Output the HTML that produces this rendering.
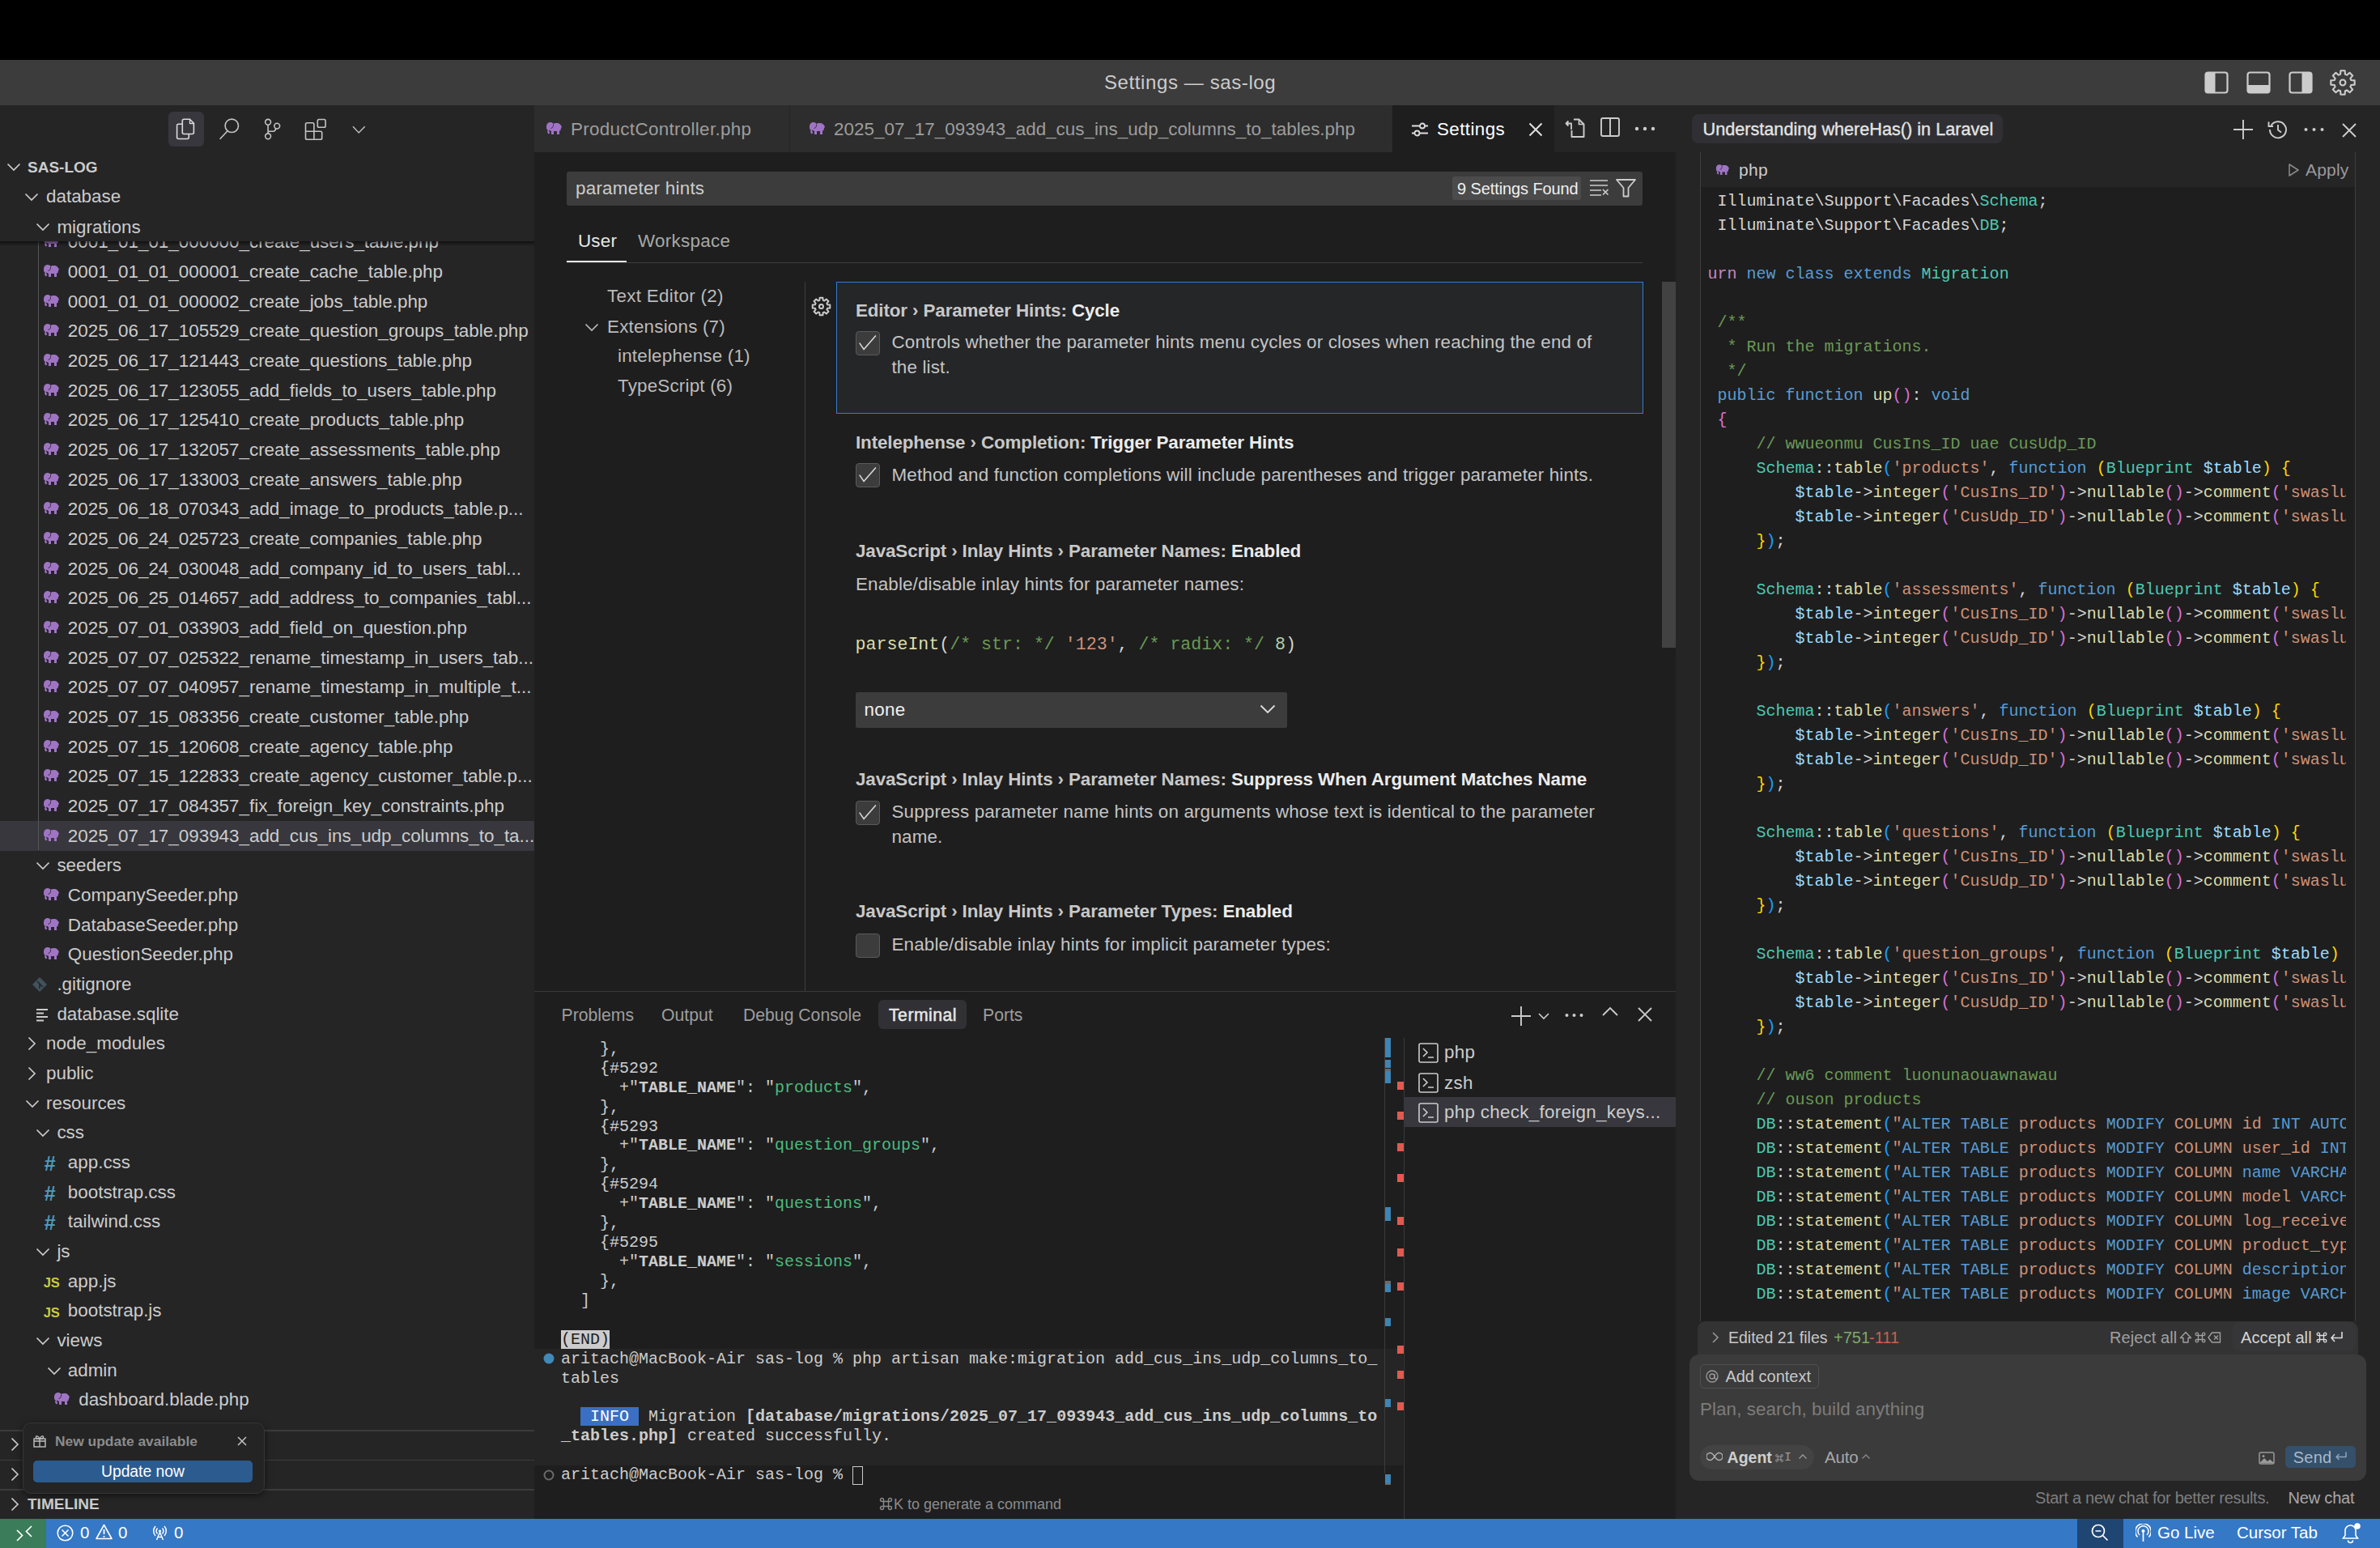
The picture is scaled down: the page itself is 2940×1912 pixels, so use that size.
<!DOCTYPE html><html><head><meta charset="utf-8"><style>
*{margin:0;padding:0;box-sizing:border-box}
html,body{width:2940px;height:1912px;overflow:hidden;background:#000;font-family:"Liberation Sans",sans-serif}
.r{position:absolute}
.t{position:absolute;white-space:pre}
.m{position:absolute;white-space:pre;font-family:"Liberation Mono",monospace}
</style></head><body><div class="r" style="left:0.0px;top:0.0px;width:2940.0px;height:74.0px;background:#000;"></div>
<div class="r" style="left:0.0px;top:74.0px;width:2940.0px;height:56.0px;background:#3c3c3c;"></div>
<div class="r" style="left:0.0px;top:130.0px;width:660.0px;height:1746.0px;background:#252526;"></div>
<div class="r" style="left:660.0px;top:130.0px;width:1410.0px;height:58.0px;background:#252526;"></div>
<div class="r" style="left:660.0px;top:188.0px;width:1410.0px;height:1036.0px;background:#1e1e1e;"></div>
<div class="r" style="left:660.0px;top:1224.0px;width:1410.0px;height:652.0px;background:#1e1e1e;"></div>
<div class="r" style="left:2070.0px;top:130.0px;width:870.0px;height:1746.0px;background:#252526;"></div>
<div class="r" style="left:0.0px;top:1876.0px;width:2940.0px;height:36.0px;background:#3478c6;"></div>
<div class="t" style="left:1364.0px;top:82.0px;font-size:24px;line-height:40px;color:#cccccc;font-weight:400;letter-spacing:0.6px;">Settings — sas-log</div>
<svg class="r" style="left:2722.0px;top:86.0px;" width="32" height="32" viewBox="0 0 32 32"><rect x="2.5" y="3.5" width="27" height="25" rx="3" fill="none" stroke="#ccc" stroke-width="2.2"/><rect x="3" y="4" width="11.5" height="24" fill="#ccc"/></svg>
<svg class="r" style="left:2774.0px;top:86.0px;" width="32" height="32" viewBox="0 0 32 32"><rect x="2.5" y="3.5" width="27" height="25" rx="3" fill="none" stroke="#ccc" stroke-width="2.2"/><rect x="3" y="19" width="26" height="9" fill="#ccc"/></svg>
<svg class="r" style="left:2826.0px;top:86.0px;" width="32" height="32" viewBox="0 0 32 32"><rect x="2.5" y="3.5" width="27" height="25" rx="3" fill="none" stroke="#ccc" stroke-width="2.2"/><rect x="17.5" y="4" width="11.5" height="24" fill="#ccc"/></svg>
<svg class="r" style="left:2877.0px;top:85.0px;" width="34" height="34" viewBox="0 0 32 32"><g transform="translate(16 16) scale(0.9) translate(-16 -16)"><path d="M12.91,5.23 L13.29,0.64 L18.71,0.64 L19.09,5.23 L21.43,6.20 L24.95,3.22 L28.78,7.05 L25.80,10.57 L26.77,12.91 L31.36,13.29 L31.36,18.71 L26.77,19.09 L25.80,21.43 L28.78,24.95 L24.95,28.78 L21.43,25.80 L19.09,26.77 L18.71,31.36 L13.29,31.36 L12.91,26.77 L10.57,25.80 L7.05,28.78 L3.22,24.95 L6.20,21.43 L5.23,19.09 L0.64,18.71 L0.64,13.29 L5.23,12.91 L6.20,10.57 L3.22,7.05 L7.05,3.22 L10.57,6.20Z" fill="none" stroke="#ccc" stroke-width="2.2" stroke-linejoin="round"/><circle cx="16" cy="16" r="3.6" fill="none" stroke="#ccc" stroke-width="2.2"/></g></svg>
<div class="r" style="left:208.0px;top:138.0px;width:44.0px;height:43.0px;background:#37373d;border-radius:6px"></div>
<svg class="r" style="left:200.0px;top:130.0px;" width="260" height="60" viewBox="0 0 260 60">
<g fill="none" stroke-width="1.6" stroke-linejoin="round">
<path d="M18.6 25.3V39.5a2 2 0 0 0 2 2H31.3a2 2 0 0 0 2-2v-4" stroke="#dcdcdc"/>
<path d="M25.3 23.3h-4.7a2 2 0 0 0-2 2" stroke="#dcdcdc"/>
<path d="M27.3 17.2h7.1l5 5V33.5a2 2 0 0 1-2 2H27.3a2 2 0 0 1-2-2V19.2a2 2 0 0 1 2-2z" stroke="#dcdcdc"/>
<path d="M34.5 17.5v5h5" stroke="#dcdcdc" stroke-width="1.3"/>
<circle cx="86.3" cy="25.3" r="8.2" stroke="#c4c4c4"/>
<path d="M80.6 32.2L72.1 41.3" stroke="#c4c4c4" stroke-linecap="round"/>
<circle cx="131.1" cy="20.8" r="3.4" stroke="#c4c4c4"/>
<circle cx="131.1" cy="38.3" r="3.4" stroke="#c4c4c4"/>
<circle cx="142.2" cy="25.6" r="3.4" stroke="#c4c4c4"/>
<path d="M131.1 24.2V34.9M131.1 32.2h6.5c1.5 0 2.8-1.8 3.2-3.4" stroke="#c4c4c4"/>
<path d="M177.5 23.5a1.8 1.8 0 0 1 1.8-1.8h6.8a1.8 1.8 0 0 1 1.8 1.8v8.7h8a1.8 1.8 0 0 1 1.8 1.8v6.5a1.8 1.8 0 0 1-1.8 1.8H179.3a1.8 1.8 0 0 1-1.8-1.8z" stroke="#c4c4c4"/>
<path d="M177.5 32.2h10.4v9.6" stroke="#c4c4c4"/>
<rect x="192.3" y="17.5" width="9.8" height="9.8" rx="1.8" stroke="#c4c4c4"/>
<path d="M236 26.2l7.1 7.7 7.6-7.7" stroke="#c4c4c4" stroke-width="1.4"/>
</g></svg>
<div class="r" style="left:0;top:298px;width:660px;height:1468px;overflow:hidden">
<svg class="r" style="left:52.8px;top:-7.7px;" width="20" height="15" viewBox="0 0 20 15"><path d="M1,6 C1,2 3,0 6,0 C8,0 9,1 9.5,2 C10.5,1 12,1 14,1 C17,1 19,3 20,6 L19,7 L18.5,10 L17,10.5 L17,15 L14,15 L14,11 L10,11 L10,15 L7,15 L7,11 C6,10.5 5,10 4.5,9.5 L4,11 L5.5,13 L3.5,14.5 L2,12 L2.8,9.8 C1.3,9 1,8 1,6 Z" fill="#a074c4"/><path d="M9.5 2.5 C9.8 5 9 7 6.5 7.5" fill="none" stroke="#252526" stroke-width="0.9"/></svg>
<div class="t" style="left:83.8px;top:-16.7px;font-size:22.4px;line-height:36px;color:#cccccc;font-weight:400;letter-spacing:0px;">0001_01_01_000000_create_users_table.php</div>
<svg class="r" style="left:52.8px;top:29.0px;" width="20" height="15" viewBox="0 0 20 15"><path d="M1,6 C1,2 3,0 6,0 C8,0 9,1 9.5,2 C10.5,1 12,1 14,1 C17,1 19,3 20,6 L19,7 L18.5,10 L17,10.5 L17,15 L14,15 L14,11 L10,11 L10,15 L7,15 L7,11 C6,10.5 5,10 4.5,9.5 L4,11 L5.5,13 L3.5,14.5 L2,12 L2.8,9.8 C1.3,9 1,8 1,6 Z" fill="#a074c4"/><path d="M9.5 2.5 C9.8 5 9 7 6.5 7.5" fill="none" stroke="#252526" stroke-width="0.9"/></svg>
<div class="t" style="left:83.8px;top:20.0px;font-size:22.4px;line-height:36px;color:#cccccc;font-weight:400;letter-spacing:0px;">0001_01_01_000001_create_cache_table.php</div>
<svg class="r" style="left:52.8px;top:65.7px;" width="20" height="15" viewBox="0 0 20 15"><path d="M1,6 C1,2 3,0 6,0 C8,0 9,1 9.5,2 C10.5,1 12,1 14,1 C17,1 19,3 20,6 L19,7 L18.5,10 L17,10.5 L17,15 L14,15 L14,11 L10,11 L10,15 L7,15 L7,11 C6,10.5 5,10 4.5,9.5 L4,11 L5.5,13 L3.5,14.5 L2,12 L2.8,9.8 C1.3,9 1,8 1,6 Z" fill="#a074c4"/><path d="M9.5 2.5 C9.8 5 9 7 6.5 7.5" fill="none" stroke="#252526" stroke-width="0.9"/></svg>
<div class="t" style="left:83.8px;top:56.7px;font-size:22.4px;line-height:36px;color:#cccccc;font-weight:400;letter-spacing:0px;">0001_01_01_000002_create_jobs_table.php</div>
<svg class="r" style="left:52.8px;top:102.3px;" width="20" height="15" viewBox="0 0 20 15"><path d="M1,6 C1,2 3,0 6,0 C8,0 9,1 9.5,2 C10.5,1 12,1 14,1 C17,1 19,3 20,6 L19,7 L18.5,10 L17,10.5 L17,15 L14,15 L14,11 L10,11 L10,15 L7,15 L7,11 C6,10.5 5,10 4.5,9.5 L4,11 L5.5,13 L3.5,14.5 L2,12 L2.8,9.8 C1.3,9 1,8 1,6 Z" fill="#a074c4"/><path d="M9.5 2.5 C9.8 5 9 7 6.5 7.5" fill="none" stroke="#252526" stroke-width="0.9"/></svg>
<div class="t" style="left:83.8px;top:93.3px;font-size:22.4px;line-height:36px;color:#cccccc;font-weight:400;letter-spacing:0px;">2025_06_17_105529_create_question_groups_table.php</div>
<svg class="r" style="left:52.8px;top:139.0px;" width="20" height="15" viewBox="0 0 20 15"><path d="M1,6 C1,2 3,0 6,0 C8,0 9,1 9.5,2 C10.5,1 12,1 14,1 C17,1 19,3 20,6 L19,7 L18.5,10 L17,10.5 L17,15 L14,15 L14,11 L10,11 L10,15 L7,15 L7,11 C6,10.5 5,10 4.5,9.5 L4,11 L5.5,13 L3.5,14.5 L2,12 L2.8,9.8 C1.3,9 1,8 1,6 Z" fill="#a074c4"/><path d="M9.5 2.5 C9.8 5 9 7 6.5 7.5" fill="none" stroke="#252526" stroke-width="0.9"/></svg>
<div class="t" style="left:83.8px;top:130.0px;font-size:22.4px;line-height:36px;color:#cccccc;font-weight:400;letter-spacing:0px;">2025_06_17_121443_create_questions_table.php</div>
<svg class="r" style="left:52.8px;top:175.7px;" width="20" height="15" viewBox="0 0 20 15"><path d="M1,6 C1,2 3,0 6,0 C8,0 9,1 9.5,2 C10.5,1 12,1 14,1 C17,1 19,3 20,6 L19,7 L18.5,10 L17,10.5 L17,15 L14,15 L14,11 L10,11 L10,15 L7,15 L7,11 C6,10.5 5,10 4.5,9.5 L4,11 L5.5,13 L3.5,14.5 L2,12 L2.8,9.8 C1.3,9 1,8 1,6 Z" fill="#a074c4"/><path d="M9.5 2.5 C9.8 5 9 7 6.5 7.5" fill="none" stroke="#252526" stroke-width="0.9"/></svg>
<div class="t" style="left:83.8px;top:166.7px;font-size:22.4px;line-height:36px;color:#cccccc;font-weight:400;letter-spacing:0px;">2025_06_17_123055_add_fields_to_users_table.php</div>
<svg class="r" style="left:52.8px;top:212.3px;" width="20" height="15" viewBox="0 0 20 15"><path d="M1,6 C1,2 3,0 6,0 C8,0 9,1 9.5,2 C10.5,1 12,1 14,1 C17,1 19,3 20,6 L19,7 L18.5,10 L17,10.5 L17,15 L14,15 L14,11 L10,11 L10,15 L7,15 L7,11 C6,10.5 5,10 4.5,9.5 L4,11 L5.5,13 L3.5,14.5 L2,12 L2.8,9.8 C1.3,9 1,8 1,6 Z" fill="#a074c4"/><path d="M9.5 2.5 C9.8 5 9 7 6.5 7.5" fill="none" stroke="#252526" stroke-width="0.9"/></svg>
<div class="t" style="left:83.8px;top:203.3px;font-size:22.4px;line-height:36px;color:#cccccc;font-weight:400;letter-spacing:0px;">2025_06_17_125410_create_products_table.php</div>
<svg class="r" style="left:52.8px;top:249.0px;" width="20" height="15" viewBox="0 0 20 15"><path d="M1,6 C1,2 3,0 6,0 C8,0 9,1 9.5,2 C10.5,1 12,1 14,1 C17,1 19,3 20,6 L19,7 L18.5,10 L17,10.5 L17,15 L14,15 L14,11 L10,11 L10,15 L7,15 L7,11 C6,10.5 5,10 4.5,9.5 L4,11 L5.5,13 L3.5,14.5 L2,12 L2.8,9.8 C1.3,9 1,8 1,6 Z" fill="#a074c4"/><path d="M9.5 2.5 C9.8 5 9 7 6.5 7.5" fill="none" stroke="#252526" stroke-width="0.9"/></svg>
<div class="t" style="left:83.8px;top:240.0px;font-size:22.4px;line-height:36px;color:#cccccc;font-weight:400;letter-spacing:0px;">2025_06_17_132057_create_assessments_table.php</div>
<svg class="r" style="left:52.8px;top:285.7px;" width="20" height="15" viewBox="0 0 20 15"><path d="M1,6 C1,2 3,0 6,0 C8,0 9,1 9.5,2 C10.5,1 12,1 14,1 C17,1 19,3 20,6 L19,7 L18.5,10 L17,10.5 L17,15 L14,15 L14,11 L10,11 L10,15 L7,15 L7,11 C6,10.5 5,10 4.5,9.5 L4,11 L5.5,13 L3.5,14.5 L2,12 L2.8,9.8 C1.3,9 1,8 1,6 Z" fill="#a074c4"/><path d="M9.5 2.5 C9.8 5 9 7 6.5 7.5" fill="none" stroke="#252526" stroke-width="0.9"/></svg>
<div class="t" style="left:83.8px;top:276.7px;font-size:22.4px;line-height:36px;color:#cccccc;font-weight:400;letter-spacing:0px;">2025_06_17_133003_create_answers_table.php</div>
<svg class="r" style="left:52.8px;top:322.3px;" width="20" height="15" viewBox="0 0 20 15"><path d="M1,6 C1,2 3,0 6,0 C8,0 9,1 9.5,2 C10.5,1 12,1 14,1 C17,1 19,3 20,6 L19,7 L18.5,10 L17,10.5 L17,15 L14,15 L14,11 L10,11 L10,15 L7,15 L7,11 C6,10.5 5,10 4.5,9.5 L4,11 L5.5,13 L3.5,14.5 L2,12 L2.8,9.8 C1.3,9 1,8 1,6 Z" fill="#a074c4"/><path d="M9.5 2.5 C9.8 5 9 7 6.5 7.5" fill="none" stroke="#252526" stroke-width="0.9"/></svg>
<div class="t" style="left:83.8px;top:313.3px;font-size:22.4px;line-height:36px;color:#cccccc;font-weight:400;letter-spacing:0px;">2025_06_18_070343_add_image_to_products_table.p...</div>
<svg class="r" style="left:52.8px;top:359.0px;" width="20" height="15" viewBox="0 0 20 15"><path d="M1,6 C1,2 3,0 6,0 C8,0 9,1 9.5,2 C10.5,1 12,1 14,1 C17,1 19,3 20,6 L19,7 L18.5,10 L17,10.5 L17,15 L14,15 L14,11 L10,11 L10,15 L7,15 L7,11 C6,10.5 5,10 4.5,9.5 L4,11 L5.5,13 L3.5,14.5 L2,12 L2.8,9.8 C1.3,9 1,8 1,6 Z" fill="#a074c4"/><path d="M9.5 2.5 C9.8 5 9 7 6.5 7.5" fill="none" stroke="#252526" stroke-width="0.9"/></svg>
<div class="t" style="left:83.8px;top:350.0px;font-size:22.4px;line-height:36px;color:#cccccc;font-weight:400;letter-spacing:0px;">2025_06_24_025723_create_companies_table.php</div>
<svg class="r" style="left:52.8px;top:395.7px;" width="20" height="15" viewBox="0 0 20 15"><path d="M1,6 C1,2 3,0 6,0 C8,0 9,1 9.5,2 C10.5,1 12,1 14,1 C17,1 19,3 20,6 L19,7 L18.5,10 L17,10.5 L17,15 L14,15 L14,11 L10,11 L10,15 L7,15 L7,11 C6,10.5 5,10 4.5,9.5 L4,11 L5.5,13 L3.5,14.5 L2,12 L2.8,9.8 C1.3,9 1,8 1,6 Z" fill="#a074c4"/><path d="M9.5 2.5 C9.8 5 9 7 6.5 7.5" fill="none" stroke="#252526" stroke-width="0.9"/></svg>
<div class="t" style="left:83.8px;top:386.7px;font-size:22.4px;line-height:36px;color:#cccccc;font-weight:400;letter-spacing:0px;">2025_06_24_030048_add_company_id_to_users_tabl...</div>
<svg class="r" style="left:52.8px;top:432.3px;" width="20" height="15" viewBox="0 0 20 15"><path d="M1,6 C1,2 3,0 6,0 C8,0 9,1 9.5,2 C10.5,1 12,1 14,1 C17,1 19,3 20,6 L19,7 L18.5,10 L17,10.5 L17,15 L14,15 L14,11 L10,11 L10,15 L7,15 L7,11 C6,10.5 5,10 4.5,9.5 L4,11 L5.5,13 L3.5,14.5 L2,12 L2.8,9.8 C1.3,9 1,8 1,6 Z" fill="#a074c4"/><path d="M9.5 2.5 C9.8 5 9 7 6.5 7.5" fill="none" stroke="#252526" stroke-width="0.9"/></svg>
<div class="t" style="left:83.8px;top:423.3px;font-size:22.4px;line-height:36px;color:#cccccc;font-weight:400;letter-spacing:0px;">2025_06_25_014657_add_address_to_companies_tabl...</div>
<svg class="r" style="left:52.8px;top:469.0px;" width="20" height="15" viewBox="0 0 20 15"><path d="M1,6 C1,2 3,0 6,0 C8,0 9,1 9.5,2 C10.5,1 12,1 14,1 C17,1 19,3 20,6 L19,7 L18.5,10 L17,10.5 L17,15 L14,15 L14,11 L10,11 L10,15 L7,15 L7,11 C6,10.5 5,10 4.5,9.5 L4,11 L5.5,13 L3.5,14.5 L2,12 L2.8,9.8 C1.3,9 1,8 1,6 Z" fill="#a074c4"/><path d="M9.5 2.5 C9.8 5 9 7 6.5 7.5" fill="none" stroke="#252526" stroke-width="0.9"/></svg>
<div class="t" style="left:83.8px;top:460.0px;font-size:22.4px;line-height:36px;color:#cccccc;font-weight:400;letter-spacing:0px;">2025_07_01_033903_add_field_on_question.php</div>
<svg class="r" style="left:52.8px;top:505.7px;" width="20" height="15" viewBox="0 0 20 15"><path d="M1,6 C1,2 3,0 6,0 C8,0 9,1 9.5,2 C10.5,1 12,1 14,1 C17,1 19,3 20,6 L19,7 L18.5,10 L17,10.5 L17,15 L14,15 L14,11 L10,11 L10,15 L7,15 L7,11 C6,10.5 5,10 4.5,9.5 L4,11 L5.5,13 L3.5,14.5 L2,12 L2.8,9.8 C1.3,9 1,8 1,6 Z" fill="#a074c4"/><path d="M9.5 2.5 C9.8 5 9 7 6.5 7.5" fill="none" stroke="#252526" stroke-width="0.9"/></svg>
<div class="t" style="left:83.8px;top:496.7px;font-size:22.4px;line-height:36px;color:#cccccc;font-weight:400;letter-spacing:0px;">2025_07_07_025322_rename_timestamp_in_users_tab...</div>
<svg class="r" style="left:52.8px;top:542.3px;" width="20" height="15" viewBox="0 0 20 15"><path d="M1,6 C1,2 3,0 6,0 C8,0 9,1 9.5,2 C10.5,1 12,1 14,1 C17,1 19,3 20,6 L19,7 L18.5,10 L17,10.5 L17,15 L14,15 L14,11 L10,11 L10,15 L7,15 L7,11 C6,10.5 5,10 4.5,9.5 L4,11 L5.5,13 L3.5,14.5 L2,12 L2.8,9.8 C1.3,9 1,8 1,6 Z" fill="#a074c4"/><path d="M9.5 2.5 C9.8 5 9 7 6.5 7.5" fill="none" stroke="#252526" stroke-width="0.9"/></svg>
<div class="t" style="left:83.8px;top:533.3px;font-size:22.4px;line-height:36px;color:#cccccc;font-weight:400;letter-spacing:0px;">2025_07_07_040957_rename_timestamp_in_multiple_t...</div>
<svg class="r" style="left:52.8px;top:579.0px;" width="20" height="15" viewBox="0 0 20 15"><path d="M1,6 C1,2 3,0 6,0 C8,0 9,1 9.5,2 C10.5,1 12,1 14,1 C17,1 19,3 20,6 L19,7 L18.5,10 L17,10.5 L17,15 L14,15 L14,11 L10,11 L10,15 L7,15 L7,11 C6,10.5 5,10 4.5,9.5 L4,11 L5.5,13 L3.5,14.5 L2,12 L2.8,9.8 C1.3,9 1,8 1,6 Z" fill="#a074c4"/><path d="M9.5 2.5 C9.8 5 9 7 6.5 7.5" fill="none" stroke="#252526" stroke-width="0.9"/></svg>
<div class="t" style="left:83.8px;top:570.0px;font-size:22.4px;line-height:36px;color:#cccccc;font-weight:400;letter-spacing:0px;">2025_07_15_083356_create_customer_table.php</div>
<svg class="r" style="left:52.8px;top:615.7px;" width="20" height="15" viewBox="0 0 20 15"><path d="M1,6 C1,2 3,0 6,0 C8,0 9,1 9.5,2 C10.5,1 12,1 14,1 C17,1 19,3 20,6 L19,7 L18.5,10 L17,10.5 L17,15 L14,15 L14,11 L10,11 L10,15 L7,15 L7,11 C6,10.5 5,10 4.5,9.5 L4,11 L5.5,13 L3.5,14.5 L2,12 L2.8,9.8 C1.3,9 1,8 1,6 Z" fill="#a074c4"/><path d="M9.5 2.5 C9.8 5 9 7 6.5 7.5" fill="none" stroke="#252526" stroke-width="0.9"/></svg>
<div class="t" style="left:83.8px;top:606.7px;font-size:22.4px;line-height:36px;color:#cccccc;font-weight:400;letter-spacing:0px;">2025_07_15_120608_create_agency_table.php</div>
<svg class="r" style="left:52.8px;top:652.3px;" width="20" height="15" viewBox="0 0 20 15"><path d="M1,6 C1,2 3,0 6,0 C8,0 9,1 9.5,2 C10.5,1 12,1 14,1 C17,1 19,3 20,6 L19,7 L18.5,10 L17,10.5 L17,15 L14,15 L14,11 L10,11 L10,15 L7,15 L7,11 C6,10.5 5,10 4.5,9.5 L4,11 L5.5,13 L3.5,14.5 L2,12 L2.8,9.8 C1.3,9 1,8 1,6 Z" fill="#a074c4"/><path d="M9.5 2.5 C9.8 5 9 7 6.5 7.5" fill="none" stroke="#252526" stroke-width="0.9"/></svg>
<div class="t" style="left:83.8px;top:643.3px;font-size:22.4px;line-height:36px;color:#cccccc;font-weight:400;letter-spacing:0px;">2025_07_15_122833_create_agency_customer_table.p...</div>
<svg class="r" style="left:52.8px;top:689.0px;" width="20" height="15" viewBox="0 0 20 15"><path d="M1,6 C1,2 3,0 6,0 C8,0 9,1 9.5,2 C10.5,1 12,1 14,1 C17,1 19,3 20,6 L19,7 L18.5,10 L17,10.5 L17,15 L14,15 L14,11 L10,11 L10,15 L7,15 L7,11 C6,10.5 5,10 4.5,9.5 L4,11 L5.5,13 L3.5,14.5 L2,12 L2.8,9.8 C1.3,9 1,8 1,6 Z" fill="#a074c4"/><path d="M9.5 2.5 C9.8 5 9 7 6.5 7.5" fill="none" stroke="#252526" stroke-width="0.9"/></svg>
<div class="t" style="left:83.8px;top:680.0px;font-size:22.4px;line-height:36px;color:#cccccc;font-weight:400;letter-spacing:0px;">2025_07_17_084357_fix_foreign_key_constraints.php</div>
<div class="r" style="left:0.0px;top:716.3px;width:660.0px;height:36.7px;background:#37373d;"></div>
<svg class="r" style="left:52.8px;top:725.7px;" width="20" height="15" viewBox="0 0 20 15"><path d="M1,6 C1,2 3,0 6,0 C8,0 9,1 9.5,2 C10.5,1 12,1 14,1 C17,1 19,3 20,6 L19,7 L18.5,10 L17,10.5 L17,15 L14,15 L14,11 L10,11 L10,15 L7,15 L7,11 C6,10.5 5,10 4.5,9.5 L4,11 L5.5,13 L3.5,14.5 L2,12 L2.8,9.8 C1.3,9 1,8 1,6 Z" fill="#a074c4"/><path d="M9.5 2.5 C9.8 5 9 7 6.5 7.5" fill="none" stroke="#37373d" stroke-width="0.9"/></svg>
<div class="t" style="left:83.8px;top:716.7px;font-size:22.4px;line-height:36px;color:#cccccc;font-weight:400;letter-spacing:0px;">2025_07_17_093943_add_cus_ins_udp_columns_to_ta...</div>
<svg class="r" style="left:44.4px;top:765.3px;" width="18" height="12" viewBox="0 0 18 12"><path d="M1.5 2.5l7.5 7.5 7.5-7.5" fill="none" stroke="#cccccc" stroke-width="1.7"/></svg>
<div class="t" style="left:70.4px;top:753.3px;font-size:22.4px;line-height:36px;color:#cccccc;font-weight:400;letter-spacing:0px;">seeders</div>
<svg class="r" style="left:52.8px;top:799.0px;" width="20" height="15" viewBox="0 0 20 15"><path d="M1,6 C1,2 3,0 6,0 C8,0 9,1 9.5,2 C10.5,1 12,1 14,1 C17,1 19,3 20,6 L19,7 L18.5,10 L17,10.5 L17,15 L14,15 L14,11 L10,11 L10,15 L7,15 L7,11 C6,10.5 5,10 4.5,9.5 L4,11 L5.5,13 L3.5,14.5 L2,12 L2.8,9.8 C1.3,9 1,8 1,6 Z" fill="#a074c4"/><path d="M9.5 2.5 C9.8 5 9 7 6.5 7.5" fill="none" stroke="#252526" stroke-width="0.9"/></svg>
<div class="t" style="left:83.8px;top:790.0px;font-size:22.4px;line-height:36px;color:#cccccc;font-weight:400;letter-spacing:0px;">CompanySeeder.php</div>
<svg class="r" style="left:52.8px;top:835.7px;" width="20" height="15" viewBox="0 0 20 15"><path d="M1,6 C1,2 3,0 6,0 C8,0 9,1 9.5,2 C10.5,1 12,1 14,1 C17,1 19,3 20,6 L19,7 L18.5,10 L17,10.5 L17,15 L14,15 L14,11 L10,11 L10,15 L7,15 L7,11 C6,10.5 5,10 4.5,9.5 L4,11 L5.5,13 L3.5,14.5 L2,12 L2.8,9.8 C1.3,9 1,8 1,6 Z" fill="#a074c4"/><path d="M9.5 2.5 C9.8 5 9 7 6.5 7.5" fill="none" stroke="#252526" stroke-width="0.9"/></svg>
<div class="t" style="left:83.8px;top:826.7px;font-size:22.4px;line-height:36px;color:#cccccc;font-weight:400;letter-spacing:0px;">DatabaseSeeder.php</div>
<svg class="r" style="left:52.8px;top:872.3px;" width="20" height="15" viewBox="0 0 20 15"><path d="M1,6 C1,2 3,0 6,0 C8,0 9,1 9.5,2 C10.5,1 12,1 14,1 C17,1 19,3 20,6 L19,7 L18.5,10 L17,10.5 L17,15 L14,15 L14,11 L10,11 L10,15 L7,15 L7,11 C6,10.5 5,10 4.5,9.5 L4,11 L5.5,13 L3.5,14.5 L2,12 L2.8,9.8 C1.3,9 1,8 1,6 Z" fill="#a074c4"/><path d="M9.5 2.5 C9.8 5 9 7 6.5 7.5" fill="none" stroke="#252526" stroke-width="0.9"/></svg>
<div class="t" style="left:83.8px;top:863.3px;font-size:22.4px;line-height:36px;color:#cccccc;font-weight:400;letter-spacing:0px;">QuestionSeeder.php</div>
<svg class="r" style="left:39.4px;top:908.0px;" width="20" height="20" viewBox="0 0 20 20"><path d="M10 1L19 10 10 19 1 10Z" fill="#41535b"/><path d="M7 6l3 3M10 9v6M10 9l4 4" stroke="#252526" stroke-width="1.6"/></svg>
<div class="t" style="left:70.4px;top:900.0px;font-size:22.4px;line-height:36px;color:#cccccc;font-weight:400;letter-spacing:0px;">.gitignore</div>
<svg class="r" style="left:43.4px;top:945.7px;" width="18" height="18" viewBox="0 0 18 18"><path d="M2 3h14M2 7.5h9M2 12h14M2 16.5h9" stroke="#cccccc" stroke-width="1.8"/></svg>
<div class="t" style="left:70.4px;top:936.7px;font-size:22.4px;line-height:36px;color:#cccccc;font-weight:400;letter-spacing:0px;">database.sqlite</div>
<svg class="r" style="left:33.0px;top:982.3px;" width="12" height="18" viewBox="0 0 12 18"><path d="M2.5 1.5l7.5 7.5-7.5 7.5" fill="none" stroke="#cccccc" stroke-width="1.7"/></svg>
<div class="t" style="left:57.0px;top:973.3px;font-size:22.4px;line-height:36px;color:#cccccc;font-weight:400;letter-spacing:0px;">node_modules</div>
<svg class="r" style="left:33.0px;top:1019.0px;" width="12" height="18" viewBox="0 0 12 18"><path d="M2.5 1.5l7.5 7.5-7.5 7.5" fill="none" stroke="#cccccc" stroke-width="1.7"/></svg>
<div class="t" style="left:57.0px;top:1010.0px;font-size:22.4px;line-height:36px;color:#cccccc;font-weight:400;letter-spacing:0px;">public</div>
<svg class="r" style="left:31.0px;top:1058.7px;" width="18" height="12" viewBox="0 0 18 12"><path d="M1.5 2.5l7.5 7.5 7.5-7.5" fill="none" stroke="#cccccc" stroke-width="1.7"/></svg>
<div class="t" style="left:57.0px;top:1046.7px;font-size:22.4px;line-height:36px;color:#cccccc;font-weight:400;letter-spacing:0px;">resources</div>
<svg class="r" style="left:44.4px;top:1095.3px;" width="18" height="12" viewBox="0 0 18 12"><path d="M1.5 2.5l7.5 7.5 7.5-7.5" fill="none" stroke="#cccccc" stroke-width="1.7"/></svg>
<div class="t" style="left:70.4px;top:1083.3px;font-size:22.4px;line-height:36px;color:#cccccc;font-weight:400;letter-spacing:0px;">css</div>
<div class="t" style="left:54.8px;top:1121.0px;font-size:25px;line-height:36px;color:#519aba;font-weight:700;letter-spacing:0px;">#</div>
<div class="t" style="left:83.8px;top:1120.0px;font-size:22.4px;line-height:36px;color:#cccccc;font-weight:400;letter-spacing:0px;">app.css</div>
<div class="t" style="left:54.8px;top:1157.7px;font-size:25px;line-height:36px;color:#519aba;font-weight:700;letter-spacing:0px;">#</div>
<div class="t" style="left:83.8px;top:1156.7px;font-size:22.4px;line-height:36px;color:#cccccc;font-weight:400;letter-spacing:0px;">bootstrap.css</div>
<div class="t" style="left:54.8px;top:1194.3px;font-size:25px;line-height:36px;color:#519aba;font-weight:700;letter-spacing:0px;">#</div>
<div class="t" style="left:83.8px;top:1193.3px;font-size:22.4px;line-height:36px;color:#cccccc;font-weight:400;letter-spacing:0px;">tailwind.css</div>
<svg class="r" style="left:44.4px;top:1242.0px;" width="18" height="12" viewBox="0 0 18 12"><path d="M1.5 2.5l7.5 7.5 7.5-7.5" fill="none" stroke="#cccccc" stroke-width="1.7"/></svg>
<div class="t" style="left:70.4px;top:1230.0px;font-size:22.4px;line-height:36px;color:#cccccc;font-weight:400;letter-spacing:0px;">js</div>
<div class="t" style="left:53.8px;top:1268.2px;font-size:16.5px;line-height:36px;color:#cbcb41;font-weight:700;letter-spacing:-0.3px;">JS</div>
<div class="t" style="left:83.8px;top:1266.7px;font-size:22.4px;line-height:36px;color:#cccccc;font-weight:400;letter-spacing:0px;">app.js</div>
<div class="t" style="left:53.8px;top:1304.8px;font-size:16.5px;line-height:36px;color:#cbcb41;font-weight:700;letter-spacing:-0.3px;">JS</div>
<div class="t" style="left:83.8px;top:1303.3px;font-size:22.4px;line-height:36px;color:#cccccc;font-weight:400;letter-spacing:0px;">bootstrap.js</div>
<svg class="r" style="left:44.4px;top:1352.0px;" width="18" height="12" viewBox="0 0 18 12"><path d="M1.5 2.5l7.5 7.5 7.5-7.5" fill="none" stroke="#cccccc" stroke-width="1.7"/></svg>
<div class="t" style="left:70.4px;top:1340.0px;font-size:22.4px;line-height:36px;color:#cccccc;font-weight:400;letter-spacing:0px;">views</div>
<svg class="r" style="left:57.8px;top:1388.7px;" width="18" height="12" viewBox="0 0 18 12"><path d="M1.5 2.5l7.5 7.5 7.5-7.5" fill="none" stroke="#cccccc" stroke-width="1.7"/></svg>
<div class="t" style="left:83.8px;top:1376.7px;font-size:22.4px;line-height:36px;color:#cccccc;font-weight:400;letter-spacing:0px;">admin</div>
<svg class="r" style="left:66.2px;top:1422.3px;" width="20" height="15" viewBox="0 0 20 15"><path d="M1,6 C1,2 3,0 6,0 C8,0 9,1 9.5,2 C10.5,1 12,1 14,1 C17,1 19,3 20,6 L19,7 L18.5,10 L17,10.5 L17,15 L14,15 L14,11 L10,11 L10,15 L7,15 L7,11 C6,10.5 5,10 4.5,9.5 L4,11 L5.5,13 L3.5,14.5 L2,12 L2.8,9.8 C1.3,9 1,8 1,6 Z" fill="#a074c4"/><path d="M9.5 2.5 C9.8 5 9 7 6.5 7.5" fill="none" stroke="#252526" stroke-width="0.9"/></svg>
<div class="t" style="left:97.2px;top:1413.3px;font-size:22.4px;line-height:36px;color:#cccccc;font-weight:400;letter-spacing:0px;">dashboard.blade.php</div>
<div class="r" style="left:47.0px;top:0.0px;width:1.2px;height:752.0px;background:#555555;"></div>
</div>
<div class="r" style="left:0.0px;top:188.0px;width:660.0px;height:110.0px;background:#252526;"></div>
<div class="r" style="left:0.0px;top:298.0px;width:660.0px;height:6.0px;background:linear-gradient(#0000008a,#0000);"></div>
<svg class="r" style="left:8.0px;top:200.0px;" width="18" height="12" viewBox="0 0 18 12"><path d="M1.5 2.5l7.5 7.5 7.5-7.5" fill="none" stroke="#cccccc" stroke-width="1.7"/></svg>
<div class="t" style="left:34.0px;top:188.5px;font-size:19px;line-height:36px;color:#cccccc;font-weight:700;letter-spacing:0px;">SAS-LOG</div>
<svg class="r" style="left:30.0px;top:236.5px;" width="18" height="12" viewBox="0 0 18 12"><path d="M1.5 2.5l7.5 7.5 7.5-7.5" fill="none" stroke="#cccccc" stroke-width="1.7"/></svg>
<div class="t" style="left:57.0px;top:225.0px;font-size:22.4px;line-height:36px;color:#cccccc;font-weight:400;letter-spacing:0px;">database</div>
<svg class="r" style="left:43.5px;top:273.5px;" width="18" height="12" viewBox="0 0 18 12"><path d="M1.5 2.5l7.5 7.5 7.5-7.5" fill="none" stroke="#cccccc" stroke-width="1.7"/></svg>
<div class="t" style="left:70.4px;top:263.0px;font-size:22.4px;line-height:36px;color:#cccccc;font-weight:400;letter-spacing:0px;">migrations</div>
<div class="r" style="left:0.0px;top:1766.0px;width:660.0px;height:1.5px;background:#3c3c3c;"></div>
<div class="r" style="left:0.0px;top:1802.5px;width:660.0px;height:1.5px;background:#3c3c3c;"></div>
<div class="r" style="left:0.0px;top:1839.0px;width:660.0px;height:1.5px;background:#3c3c3c;"></div>
<svg class="r" style="left:12.0px;top:1775.0px;" width="12" height="18" viewBox="0 0 12 18"><path d="M2.5 1.5l7.5 7.5-7.5 7.5" fill="none" stroke="#cccccc" stroke-width="1.7"/></svg>
<svg class="r" style="left:12.0px;top:1812.0px;" width="12" height="18" viewBox="0 0 12 18"><path d="M2.5 1.5l7.5 7.5-7.5 7.5" fill="none" stroke="#cccccc" stroke-width="1.7"/></svg>
<svg class="r" style="left:12.0px;top:1848.5px;" width="12" height="18" viewBox="0 0 12 18"><path d="M2.5 1.5l7.5 7.5-7.5 7.5" fill="none" stroke="#cccccc" stroke-width="1.7"/></svg>
<div class="t" style="left:34.0px;top:1840.0px;font-size:19px;line-height:36px;color:#cccccc;font-weight:700;letter-spacing:0px;">TIMELINE</div>
<div class="r" style="left:660.0px;top:130.0px;width:315.0px;height:58.0px;background:#2d2d2d;"></div>
<div class="r" style="left:976.0px;top:130.0px;width:744.0px;height:58.0px;background:#2d2d2d;"></div>
<div class="r" style="left:1720.0px;top:130.0px;width:200.0px;height:58.0px;background:#1e1e1e;"></div>
<svg class="r" style="left:674.0px;top:151.0px;" width="20" height="15" viewBox="0 0 20 15"><path d="M1,6 C1,2 3,0 6,0 C8,0 9,1 9.5,2 C10.5,1 12,1 14,1 C17,1 19,3 20,6 L19,7 L18.5,10 L17,10.5 L17,15 L14,15 L14,11 L10,11 L10,15 L7,15 L7,11 C6,10.5 5,10 4.5,9.5 L4,11 L5.5,13 L3.5,14.5 L2,12 L2.8,9.8 C1.3,9 1,8 1,6 Z" fill="#a074c4"/><path d="M9.5 2.5 C9.8 5 9 7 6.5 7.5" fill="none" stroke="#2d2d2d" stroke-width="0.9"/></svg>
<div class="t" style="left:705.0px;top:142.0px;font-size:22.4px;line-height:36px;color:#9d9d9d;font-weight:400;letter-spacing:0.32px;">ProductController.php</div>
<svg class="r" style="left:998.5px;top:151.0px;" width="20" height="15" viewBox="0 0 20 15"><path d="M1,6 C1,2 3,0 6,0 C8,0 9,1 9.5,2 C10.5,1 12,1 14,1 C17,1 19,3 20,6 L19,7 L18.5,10 L17,10.5 L17,15 L14,15 L14,11 L10,11 L10,15 L7,15 L7,11 C6,10.5 5,10 4.5,9.5 L4,11 L5.5,13 L3.5,14.5 L2,12 L2.8,9.8 C1.3,9 1,8 1,6 Z" fill="#a074c4"/><path d="M9.5 2.5 C9.8 5 9 7 6.5 7.5" fill="none" stroke="#2d2d2d" stroke-width="0.9"/></svg>
<div class="t" style="left:1030.0px;top:142.0px;font-size:22.4px;line-height:36px;color:#9d9d9d;font-weight:400;letter-spacing:0.03px;">2025_07_17_093943_add_cus_ins_udp_columns_to_tables.php</div>
<svg class="r" style="left:1743.0px;top:149.0px;" width="22" height="22" viewBox="0 0 22 22"><path d="M1 6.5h20M1 15.5h20" stroke="#ddd" stroke-width="1.8"/><circle cx="14" cy="6.5" r="3" fill="#1e1e1e" stroke="#ddd" stroke-width="1.8"/><circle cx="7.5" cy="15.5" r="3" fill="#1e1e1e" stroke="#ddd" stroke-width="1.8"/></svg>
<div class="t" style="left:1775.0px;top:142.0px;font-size:22.4px;line-height:36px;color:#ffffff;font-weight:400;letter-spacing:0.4px;">Settings</div>
<svg class="r" style="left:1887.0px;top:150.0px;" width="20" height="20" viewBox="0 0 20 20"><path d="M2.5 2.5l15 15M17.5 2.5l-15 15" stroke="#e0e0e0" stroke-width="2"/></svg>
<svg class="r" style="left:1931.0px;top:144.0px;" width="30" height="28" viewBox="0 0 30 28"><path d="M13 3.5h6.5l6 6v15.5h-15v-8" fill="none" stroke="#ccc" stroke-width="1.9" stroke-linejoin="round"/><path d="M19.5 3.5v6h6" fill="none" stroke="#ccc" stroke-width="1.7"/><path d="M10 16V8.5H3.5M6.5 5.5l-3 3 3 3" fill="none" stroke="#ccc" stroke-width="1.8" stroke-linejoin="round"/></svg>
<svg class="r" style="left:1976.0px;top:144.0px;" width="26" height="26" viewBox="0 0 26 26"><rect x="2" y="2" width="22" height="22" rx="2" fill="none" stroke="#ccc" stroke-width="1.9"/><path d="M13 2v22" stroke="#ccc" stroke-width="1.9"/></svg>
<svg class="r" style="left:2018.0px;top:155.0px;" width="28" height="8" viewBox="0 0 28 8"><circle cx="4" cy="4" r="2.2" fill="#ccc"/><circle cx="14" cy="4" r="2.2" fill="#ccc"/><circle cx="24" cy="4" r="2.2" fill="#ccc"/></svg>
<div class="r" style="left:700.0px;top:212.0px;width:1329.0px;height:42.0px;background:#3c3c3c;border-radius:3px"></div>
<div class="t" style="left:711.0px;top:215.0px;font-size:22.4px;line-height:36px;color:#cccccc;font-weight:400;letter-spacing:0.25px;">parameter hints</div>
<div class="r" style="left:1794.0px;top:218.0px;width:159.0px;height:28.5px;background:#4b4b4b;border-radius:3px"></div>
<div class="t" style="left:1800.0px;top:217.5px;font-size:20px;line-height:30px;color:#f0f0f0;font-weight:400;letter-spacing:-0.1px;">9 Settings Found</div>
<svg class="r" style="left:1962.0px;top:220.0px;" width="28" height="24" viewBox="0 0 28 24"><path d="M2 3h22M2 9h22M2 15h14M2 21h14" stroke="#ccc" stroke-width="1.7"/><path d="M18 14l6.5 6.5M24.5 14L18 20.5" stroke="#ccc" stroke-width="1.7"/></svg>
<svg class="r" style="left:1995.0px;top:219.0px;" width="28" height="26" viewBox="0 0 28 26"><path d="M2 3h23l-8.5 10v10.5h-6V13Z" fill="none" stroke="#ccc" stroke-width="1.8" stroke-linejoin="round"/></svg>
<div class="t" style="left:714.0px;top:280.0px;font-size:22.4px;line-height:36px;color:#e7e7e7;font-weight:400;letter-spacing:0.2px;">User</div>
<div class="t" style="left:788.0px;top:280.0px;font-size:22.4px;line-height:36px;color:#a8a8a8;font-weight:400;letter-spacing:0.3px;">Workspace</div>
<div class="r" style="left:700.0px;top:323.5px;width:1329.0px;height:1.5px;background:#3c3c3c;"></div>
<div class="r" style="left:700.0px;top:322.3px;width:74.0px;height:1.7px;background:#e7e7e7;"></div>
<div class="t" style="left:750.0px;top:348.0px;font-size:22.4px;line-height:36px;color:#bbbbbb;font-weight:400;letter-spacing:0.3px;">Text Editor (2)</div>
<svg class="r" style="left:722.0px;top:398.0px;" width="18" height="12" viewBox="0 0 18 12"><path d="M1.5 2.5l7.5 7.5 7.5-7.5" fill="none" stroke="#bbbbbb" stroke-width="1.7"/></svg>
<div class="t" style="left:750.0px;top:386.0px;font-size:22.4px;line-height:36px;color:#bbbbbb;font-weight:400;letter-spacing:0.2px;">Extensions (7)</div>
<div class="t" style="left:763.0px;top:422.0px;font-size:22.4px;line-height:36px;color:#bbbbbb;font-weight:400;letter-spacing:0.2px;">intelephense (1)</div>
<div class="t" style="left:763.0px;top:459.0px;font-size:22.4px;line-height:36px;color:#bbbbbb;font-weight:400;letter-spacing:0.2px;">TypeScript (6)</div>
<div class="r" style="left:993.5px;top:348.0px;width:1.5px;height:876.0px;background:#3e3e3e;"></div>
<div class="r" style="left:1033.0px;top:348.0px;width:997.0px;height:163.0px;background:#252628;border:1.6px solid #3b7ad0"></div>
<svg class="r" style="left:1002.0px;top:366.0px;" width="25" height="25" viewBox="0 0 32 32"><g transform="translate(16 16) scale(0.9) translate(-16 -16)"><path d="M12.91,5.23 L13.29,0.64 L18.71,0.64 L19.09,5.23 L21.43,6.20 L24.95,3.22 L28.78,7.05 L25.80,10.57 L26.77,12.91 L31.36,13.29 L31.36,18.71 L26.77,19.09 L25.80,21.43 L28.78,24.95 L24.95,28.78 L21.43,25.80 L19.09,26.77 L18.71,31.36 L13.29,31.36 L12.91,26.77 L10.57,25.80 L7.05,28.78 L3.22,24.95 L6.20,21.43 L5.23,19.09 L0.64,18.71 L0.64,13.29 L5.23,12.91 L6.20,10.57 L3.22,7.05 L7.05,3.22 L10.57,6.20Z" fill="none" stroke="#ccc" stroke-width="2.8" stroke-linejoin="round"/><circle cx="16" cy="16" r="3.6" fill="none" stroke="#ccc" stroke-width="2.8"/></g></svg>
<div class="t" style="left:1057.0px;top:365.5px;font-size:22.4px;line-height:36px;color:#ececec;font-weight:700;letter-spacing:-0.12px;"><span style="color:#c8c8c8">Editor › Parameter Hints: </span>Cycle</div>
<div class="r" style="left:1057.0px;top:409.0px;width:30.0px;height:30.0px;background:#3c3c3c;border:1.3px solid #5a5a5a;border-radius:4px"></div>
<svg class="r" style="left:1057.0px;top:409.0px;" width="30" height="30" viewBox="0 0 30 30"><path d="M4.7 14.6L10.1 22.5L24.9 5.4" fill="none" stroke="#d8d8d8" stroke-width="1.6"/></svg>
<div class="t" style="left:1101.5px;top:407.0px;font-size:22.4px;line-height:31px;color:#c4c4c4;font-weight:400;letter-spacing:0.15px;">Controls whether the parameter hints menu cycles or closes when reaching the end of</div>
<div class="t" style="left:1101.5px;top:438.0px;font-size:22.4px;line-height:31px;color:#c4c4c4;font-weight:400;letter-spacing:0.15px;">the list.</div>
<div class="t" style="left:1057.0px;top:528.5px;font-size:22.4px;line-height:36px;color:#ececec;font-weight:700;letter-spacing:-0.12px;"><span style="color:#c8c8c8">Intelephense › Completion: </span>Trigger Parameter Hints</div>
<div class="r" style="left:1057.0px;top:572.0px;width:30.0px;height:30.0px;background:#3c3c3c;border:1.3px solid #5a5a5a;border-radius:4px"></div>
<svg class="r" style="left:1057.0px;top:572.0px;" width="30" height="30" viewBox="0 0 30 30"><path d="M4.7 14.6L10.1 22.5L24.9 5.4" fill="none" stroke="#d8d8d8" stroke-width="1.6"/></svg>
<div class="t" style="left:1101.5px;top:571.0px;font-size:22.4px;line-height:31px;color:#c4c4c4;font-weight:400;letter-spacing:0.15px;">Method and function completions will include parentheses and trigger parameter hints.</div>
<div class="t" style="left:1057.0px;top:663.0px;font-size:22.4px;line-height:36px;color:#ececec;font-weight:700;letter-spacing:-0.12px;"><span style="color:#c8c8c8">JavaScript › Inlay Hints › Parameter Names: </span>Enabled</div>
<div class="t" style="left:1057.0px;top:705.5px;font-size:22.4px;line-height:31px;color:#c4c4c4;font-weight:400;letter-spacing:0.15px;">Enable/disable inlay hints for parameter names:</div>
<div class="m" style="left:1056.6px;top:777.5px;font-size:21.6px;line-height:36px;color:#d4d4d4"><span style="color:#dcdcaa">parseInt</span>(<span style="color:#6a9955">/* str: */</span> <span style="color:#ce9178">'123'</span>, <span style="color:#6a9955">/* radix: */</span> <span style="color:#b5cea8">8</span>)</div>
<div class="r" style="left:1057.0px;top:855.0px;width:533.0px;height:43.6px;background:#3c3c3c;border-radius:2px"></div>
<div class="t" style="left:1067.5px;top:859.0px;font-size:22.4px;line-height:36px;color:#f0f0f0;font-weight:400;letter-spacing:0.3px;">none</div>
<svg class="r" style="left:1555.0px;top:869.0px;" width="22" height="14" viewBox="0 0 22 14"><path d="M2.5 2.5l8.5 8.5 8.5-8.5" fill="none" stroke="#ddd" stroke-width="1.8"/></svg>
<div class="t" style="left:1057.0px;top:945.0px;font-size:22.4px;line-height:36px;color:#ececec;font-weight:700;letter-spacing:-0.12px;"><span style="color:#c8c8c8">JavaScript › Inlay Hints › Parameter Names: </span>Suppress When Argument Matches Name</div>
<div class="r" style="left:1057.0px;top:989.0px;width:30.0px;height:30.0px;background:#3c3c3c;border:1.3px solid #5a5a5a;border-radius:4px"></div>
<svg class="r" style="left:1057.0px;top:989.0px;" width="30" height="30" viewBox="0 0 30 30"><path d="M4.7 14.6L10.1 22.5L24.9 5.4" fill="none" stroke="#d8d8d8" stroke-width="1.6"/></svg>
<div class="t" style="left:1101.5px;top:986.5px;font-size:22.4px;line-height:31px;color:#c4c4c4;font-weight:400;letter-spacing:0.15px;">Suppress parameter name hints on arguments whose text is identical to the parameter</div>
<div class="t" style="left:1101.5px;top:1018.0px;font-size:22.4px;line-height:31px;color:#c4c4c4;font-weight:400;letter-spacing:0.15px;">name.</div>
<div class="t" style="left:1057.0px;top:1108.0px;font-size:22.4px;line-height:36px;color:#ececec;font-weight:700;letter-spacing:-0.12px;"><span style="color:#c8c8c8">JavaScript › Inlay Hints › Parameter Types: </span>Enabled</div>
<div class="r" style="left:1057.0px;top:1152.5px;width:30.0px;height:30.0px;background:#3c3c3c;border:1.3px solid #5a5a5a;border-radius:4px"></div>
<div class="t" style="left:1101.5px;top:1150.5px;font-size:22.4px;line-height:31px;color:#c4c4c4;font-weight:400;letter-spacing:0.15px;">Enable/disable inlay hints for implicit parameter types:</div>
<div class="r" style="left:2053.0px;top:348.0px;width:17.0px;height:452.0px;background:#424242;"></div>
<div class="r" style="left:660.0px;top:1223.5px;width:1410.0px;height:1.5px;background:#3a3a3a;"></div>
<div class="t" style="left:693.6px;top:1235.5px;font-size:21.2px;line-height:36px;color:#9d9d9d;font-weight:400;letter-spacing:0px;">Problems</div>
<div class="t" style="left:817.0px;top:1235.5px;font-size:21.2px;line-height:36px;color:#9d9d9d;font-weight:400;letter-spacing:0px;">Output</div>
<div class="t" style="left:918.0px;top:1235.5px;font-size:21.2px;line-height:36px;color:#9d9d9d;font-weight:400;letter-spacing:0px;">Debug Console</div>
<div class="r" style="left:1085.0px;top:1235.0px;width:109.0px;height:36.0px;background:#313135;border-radius:6px"></div>
<div class="t" style="left:1098.0px;top:1235.5px;font-size:21.2px;line-height:36px;color:#e7e7e7;font-weight:400;letter-spacing:0.5px;-webkit-text-stroke:0.5px #e7e7e7">Terminal</div>
<div class="t" style="left:1214.0px;top:1235.5px;font-size:21.2px;line-height:36px;color:#9d9d9d;font-weight:400;letter-spacing:0px;">Ports</div>
<svg class="r" style="left:1866.0px;top:1242.0px;" width="26" height="26" viewBox="0 0 26 26"><path d="M13 1v24M1 13h24" stroke="#ccc" stroke-width="1.9"/></svg>
<svg class="r" style="left:1899.0px;top:1249.0px;" width="16" height="12" viewBox="0 0 16 12"><path d="M2 3l6 6 6-6" fill="none" stroke="#ccc" stroke-width="1.6"/></svg>
<svg class="r" style="left:1932.0px;top:1250.0px;" width="26" height="8" viewBox="0 0 26 8"><circle cx="3.5" cy="4" r="2" fill="#ccc"/><circle cx="12.5" cy="4" r="2" fill="#ccc"/><circle cx="21.5" cy="4" r="2" fill="#ccc"/></svg>
<svg class="r" style="left:1978.0px;top:1243.0px;" width="22" height="14" viewBox="0 0 22 14"><path d="M2 11l9-9 9 9" fill="none" stroke="#ccc" stroke-width="1.8"/></svg>
<svg class="r" style="left:2022.0px;top:1243.0px;" width="20" height="20" viewBox="0 0 20 20"><path d="M2 2l16 16M18 2L2 18" stroke="#ccc" stroke-width="1.9"/></svg>
<div class="r" style="left:660.0px;top:1665.6px;width:1073.0px;height:144.4px;background:#252525;"></div>
<div class="m" style="left:693px;top:1283.8px;font-size:20px;line-height:23.92px;color:#cccccc">    },</div>
<div class="m" style="left:693px;top:1307.8px;font-size:20px;line-height:23.92px;color:#cccccc">    {#5292</div>
<div class="m" style="left:693px;top:1331.7px;font-size:20px;line-height:23.92px;color:#cccccc">      +"<b>TABLE_NAME</b>": "<span style="color:#4cbb7d">products</span>",</div>
<div class="m" style="left:693px;top:1355.6px;font-size:20px;line-height:23.92px;color:#cccccc">    },</div>
<div class="m" style="left:693px;top:1379.5px;font-size:20px;line-height:23.92px;color:#cccccc">    {#5293</div>
<div class="m" style="left:693px;top:1403.4px;font-size:20px;line-height:23.92px;color:#cccccc">      +"<b>TABLE_NAME</b>": "<span style="color:#4cbb7d">question_groups</span>",</div>
<div class="m" style="left:693px;top:1427.4px;font-size:20px;line-height:23.92px;color:#cccccc">    },</div>
<div class="m" style="left:693px;top:1451.3px;font-size:20px;line-height:23.92px;color:#cccccc">    {#5294</div>
<div class="m" style="left:693px;top:1475.2px;font-size:20px;line-height:23.92px;color:#cccccc">      +"<b>TABLE_NAME</b>": "<span style="color:#4cbb7d">questions</span>",</div>
<div class="m" style="left:693px;top:1499.1px;font-size:20px;line-height:23.92px;color:#cccccc">    },</div>
<div class="m" style="left:693px;top:1523.0px;font-size:20px;line-height:23.92px;color:#cccccc">    {#5295</div>
<div class="m" style="left:693px;top:1547.0px;font-size:20px;line-height:23.92px;color:#cccccc">      +"<b>TABLE_NAME</b>": "<span style="color:#4cbb7d">sessions</span>",</div>
<div class="m" style="left:693px;top:1570.9px;font-size:20px;line-height:23.92px;color:#cccccc">    },</div>
<div class="m" style="left:693px;top:1594.8px;font-size:20px;line-height:23.92px;color:#cccccc">  ]</div>
<div class="m" style="left:693px;top:1642.6px;font-size:20px;line-height:23.92px;color:#cccccc"><span style="background:#cccccc;color:#1e1e1e">(END)</span></div>
<div class="m" style="left:693px;top:1666.6px;font-size:20px;line-height:23.92px;color:#cccccc">aritach@MacBook-Air sas-log % php artisan make:migration add_cus_ins_udp_columns_to_</div>
<div class="m" style="left:693px;top:1690.5px;font-size:20px;line-height:23.92px;color:#cccccc">tables</div>
<div class="m" style="left:693px;top:1738.3px;font-size:20px;line-height:23.92px;color:#cccccc">  <span style="background:#3a6fc4;color:#ffffff"> INFO </span> Migration <b>[database/migrations/2025_07_17_093943_add_cus_ins_udp_columns_to</b></div>
<div class="m" style="left:693px;top:1762.2px;font-size:20px;line-height:23.92px;color:#cccccc"><b>_tables.php]</b> created successfully.</div>
<div class="m" style="left:693px;top:1810.1px;font-size:20px;line-height:23.92px;color:#cccccc">aritach@MacBook-Air sas-log % </div>
<style>.m b{font-weight:700}</style>
<svg class="r" style="left:671.0px;top:1671.0px;" width="14" height="14" viewBox="0 0 14 14"><circle cx="7" cy="7" r="6.5" fill="#4189b9"/></svg>
<svg class="r" style="left:671.0px;top:1815.0px;" width="14" height="14" viewBox="0 0 14 14"><circle cx="7" cy="7" r="5.5" fill="none" stroke="#6b6b6b" stroke-width="2"/></svg>
<div class="r" style="left:1053.0px;top:1811.0px;width:13.0px;height:22.5px;background:transparent;border:1.8px solid #cccccc"></div>
<svg class="r" style="left:1086.0px;top:1849.0px;" width="17" height="17" viewBox="0 0 17 17"><path d="M5.5 5.5h6v6h-6zM5.5 5.5V3.5a2 2 0 1 0-2 2h2M11.5 5.5V3.5a2 2 0 1 1 2 2h-2M5.5 11.5v2a2 2 0 1 1-2-2h2M11.5 11.5v2a2 2 0 1 0 2-2h-2" fill="none" stroke="#8b8b8b" stroke-width="1.4"/></svg>
<div class="t" style="left:1104.0px;top:1842.5px;font-size:18px;line-height:30px;color:#8b8b8b;font-weight:400;letter-spacing:0px;">K to generate a command</div>
<div class="r" style="left:1710.0px;top:1282.0px;width:1.0px;height:538.0px;background:#3a3a3a;"></div>
<div class="r" style="left:1733.5px;top:1282.0px;width:1.0px;height:594.0px;background:#3a3a3a;"></div>
<div class="r" style="left:1711.0px;top:1282.0px;width:7.0px;height:23.5px;background:#3d85b4;"></div>
<div class="r" style="left:1711.0px;top:1309.0px;width:7.0px;height:10.0px;background:#3d85b4;"></div>
<div class="r" style="left:1711.0px;top:1323.0px;width:7.0px;height:14.5px;background:#3d85b4;"></div>
<div class="r" style="left:1711.0px;top:1491.0px;width:7.0px;height:16.6px;background:#3d85b4;"></div>
<div class="r" style="left:1711.0px;top:1586.0px;width:7.0px;height:10.0px;background:#3d85b4;"></div>
<div class="r" style="left:1711.0px;top:1628.0px;width:7.0px;height:10.0px;background:#3d85b4;"></div>
<div class="r" style="left:1711.0px;top:1728.0px;width:7.0px;height:10.0px;background:#3d85b4;"></div>
<div class="r" style="left:1711.0px;top:1820.8px;width:7.0px;height:10.8px;background:#3d85b4;"></div>
<div class="r" style="left:1726.0px;top:1336.0px;width:7.5px;height:10.0px;background:#e05a50;"></div>
<div class="r" style="left:1726.0px;top:1372.7px;width:7.5px;height:10.0px;background:#e05a50;"></div>
<div class="r" style="left:1726.0px;top:1412.0px;width:7.5px;height:10.0px;background:#e05a50;"></div>
<div class="r" style="left:1726.0px;top:1450.0px;width:7.5px;height:10.0px;background:#e05a50;"></div>
<div class="r" style="left:1726.0px;top:1503.0px;width:7.5px;height:10.0px;background:#e05a50;"></div>
<div class="r" style="left:1726.0px;top:1542.0px;width:7.5px;height:10.0px;background:#e05a50;"></div>
<div class="r" style="left:1726.0px;top:1584.0px;width:7.5px;height:10.0px;background:#e05a50;"></div>
<div class="r" style="left:1726.0px;top:1662.0px;width:7.5px;height:10.0px;background:#e05a50;"></div>
<div class="r" style="left:1726.0px;top:1692.7px;width:7.5px;height:10.0px;background:#e05a50;"></div>
<div class="r" style="left:1726.0px;top:1731.5px;width:7.5px;height:10.0px;background:#e05a50;"></div>
<div class="r" style="left:1711.0px;top:1319.5px;width:7.0px;height:3.0px;background:#6a6a6a;"></div>
<div class="r" style="left:1711.0px;top:1582.0px;width:7.0px;height:4.0px;background:#6a6a6a;"></div>
<div class="r" style="left:1711.0px;top:1831.6px;width:7.0px;height:2.5px;background:#6a6a6a;"></div>
<div class="r" style="left:1734.0px;top:1355.0px;width:336.0px;height:36.6px;background:#37373d;"></div>
<svg class="r" style="left:1752.0px;top:1287.5px;" width="25" height="25" viewBox="0 0 25 25"><rect x="1" y="1" width="23" height="23" rx="2" fill="none" stroke="#ccc" stroke-width="1.6"/><path d="M6 7l5 5-5 5M12 18h7" fill="none" stroke="#ccc" stroke-width="1.6"/></svg>
<div class="t" style="left:1784.0px;top:1282.0px;font-size:22.4px;line-height:36px;color:#cccccc;font-weight:400;letter-spacing:0.3px;">php</div>
<svg class="r" style="left:1752.0px;top:1325.0px;" width="25" height="25" viewBox="0 0 25 25"><rect x="1" y="1" width="23" height="23" rx="2" fill="none" stroke="#ccc" stroke-width="1.6"/><path d="M6 7l5 5-5 5M12 18h7" fill="none" stroke="#ccc" stroke-width="1.6"/></svg>
<div class="t" style="left:1784.0px;top:1319.5px;font-size:22.4px;line-height:36px;color:#cccccc;font-weight:400;letter-spacing:0.3px;">zsh</div>
<svg class="r" style="left:1752.0px;top:1361.5px;" width="25" height="25" viewBox="0 0 25 25"><rect x="1" y="1" width="23" height="23" rx="2" fill="none" stroke="#ccc" stroke-width="1.6"/><path d="M6 7l5 5-5 5M12 18h7" fill="none" stroke="#ccc" stroke-width="1.6"/></svg>
<div class="t" style="left:1784.0px;top:1356.0px;font-size:22.4px;line-height:36px;color:#cccccc;font-weight:400;letter-spacing:0.3px;">php check_foreign_keys...</div>
<div class="r" style="left:2090.0px;top:141.0px;width:384.0px;height:36.0px;background:#303034;border-radius:8px"></div>
<div class="t" style="left:2103.5px;top:142.0px;font-size:21.67px;line-height:36px;color:#e4e4e4;font-weight:400;letter-spacing:0px;-webkit-text-stroke:0.35px #e4e4e4">Understanding whereHas() in Laravel</div>
<svg class="r" style="left:2758.0px;top:147.0px;" width="26" height="26" viewBox="0 0 26 26"><path d="M13 1v24M1 13h24" stroke="#ccc" stroke-width="1.9"/></svg>
<svg class="r" style="left:2800.0px;top:146.0px;" width="28" height="28" viewBox="0 0 28 28"><path d="M5.5 9A10 10 0 1 1 4 14" fill="none" stroke="#ccc" stroke-width="1.9"/><path d="M2.5 4.5v5.5h5.5" fill="none" stroke="#ccc" stroke-width="1.9"/><path d="M14 8v6.5l4 3" fill="none" stroke="#ccc" stroke-width="1.9"/></svg>
<svg class="r" style="left:2845.0px;top:156.0px;" width="28" height="8" viewBox="0 0 28 8"><circle cx="3.5" cy="4" r="2" fill="#ccc"/><circle cx="13.5" cy="4" r="2" fill="#ccc"/><circle cx="23.5" cy="4" r="2" fill="#ccc"/></svg>
<svg class="r" style="left:2892.0px;top:151.0px;" width="20" height="20" viewBox="0 0 20 20"><path d="M2 2l16 16M18 2L2 18" stroke="#ccc" stroke-width="1.9"/></svg>
<div class="r" style="left:2100.0px;top:188.0px;width:1.3px;height:1444.0px;background:#3e3e3e;"></div>
<div class="r" style="left:2908.7px;top:188.0px;width:1.3px;height:1444.0px;background:#3e3e3e;"></div>
<div class="r" style="left:2101.3px;top:231.0px;width:807.4px;height:1401.0px;background:#1e1e1e;"></div>
<svg class="r" style="left:2119.0px;top:203.0px;" width="17" height="13" viewBox="0 0 20 15"><path d="M1,6 C1,2 3,0 6,0 C8,0 9,1 9.5,2 C10.5,1 12,1 14,1 C17,1 19,3 20,6 L19,7 L18.5,10 L17,10.5 L17,15 L14,15 L14,11 L10,11 L10,15 L7,15 L7,11 C6,10.5 5,10 4.5,9.5 L4,11 L5.5,13 L3.5,14.5 L2,12 L2.8,9.8 C1.3,9 1,8 1,6 Z" fill="#a074c4"/><path d="M9.5 2.5 C9.8 5 9 7 6.5 7.5" fill="none" stroke="#252526" stroke-width="0.9"/></svg>
<div class="t" style="left:2148.0px;top:191.6px;font-size:21px;line-height:36px;color:#cccccc;font-weight:400;letter-spacing:0.3px;">php</div>
<svg class="r" style="left:2825.0px;top:200.0px;" width="17" height="20" viewBox="0 0 17 20"><path d="M3 3l11 7-11 7z" fill="none" stroke="#8b8b8b" stroke-width="1.5" stroke-linejoin="round"/></svg>
<div class="t" style="left:2848.0px;top:191.6px;font-size:21px;line-height:36px;color:#9a9a9a;font-weight:400;letter-spacing:0.2px;">Apply</div>
<div class="r" style="left:2101.3px;top:231px;width:796.7px;height:1401px;overflow:hidden">
<div class="m" style="left:8.2px;top:2.8px;font-size:20px;line-height:30px;color:#d4d4d4"> Illuminate\Support\Facades\<span style="color:#4ec9b0">Schema</span>;</div>
<div class="m" style="left:8.2px;top:32.8px;font-size:20px;line-height:30px;color:#d4d4d4"> Illuminate\Support\Facades\<span style="color:#4ec9b0">DB</span>;</div>
<div class="m" style="left:8.2px;top:62.8px;font-size:20px;line-height:30px;color:#d4d4d4"></div>
<div class="m" style="left:8.2px;top:92.8px;font-size:20px;line-height:30px;color:#d4d4d4"><span style="color:#c586c0">urn</span> <span style="color:#569cd6">new</span> <span style="color:#569cd6">class</span> <span style="color:#569cd6">extends</span> <span style="color:#4ec9b0">Migration</span></div>
<div class="m" style="left:8.2px;top:122.8px;font-size:20px;line-height:30px;color:#d4d4d4"></div>
<div class="m" style="left:8.2px;top:152.8px;font-size:20px;line-height:30px;color:#d4d4d4"> <span style="color:#6a9955">/**</span></div>
<div class="m" style="left:8.2px;top:182.8px;font-size:20px;line-height:30px;color:#d4d4d4">  <span style="color:#6a9955">* Run the migrations.</span></div>
<div class="m" style="left:8.2px;top:212.8px;font-size:20px;line-height:30px;color:#d4d4d4">  <span style="color:#6a9955">*/</span></div>
<div class="m" style="left:8.2px;top:242.8px;font-size:20px;line-height:30px;color:#d4d4d4"> <span style="color:#569cd6">public</span> <span style="color:#569cd6">function</span> <span style="color:#dcdcaa">up</span><span style="color:#da70d6">()</span>: <span style="color:#569cd6">void</span></div>
<div class="m" style="left:8.2px;top:272.8px;font-size:20px;line-height:30px;color:#d4d4d4"> <span style="color:#da70d6">{</span></div>
<div class="m" style="left:8.2px;top:302.8px;font-size:20px;line-height:30px;color:#d4d4d4">     <span style="color:#6a9955">// wwueonmu CusIns_ID uae CusUdp_ID</span></div>
<div class="m" style="left:8.2px;top:332.8px;font-size:20px;line-height:30px;color:#d4d4d4">     <span style="color:#4ec9b0">Schema</span>::<span style="color:#dcdcaa">table</span><span style="color:#179fff">(</span><span style="color:#ce9178">&#x27;products&#x27;</span>, <span style="color:#569cd6">function</span> <span style="color:#ffd700">(</span><span style="color:#4ec9b0">Blueprint</span> <span style="color:#9cdcfe">$table</span><span style="color:#ffd700">)</span> <span style="color:#ffd700">{</span></div>
<div class="m" style="left:8.2px;top:362.8px;font-size:20px;line-height:30px;color:#d4d4d4">         <span style="color:#9cdcfe">$table</span>-><span style="color:#dcdcaa">integer</span><span style="color:#da70d6">(</span><span style="color:#ce9178">&#x27;CusIns_ID&#x27;</span><span style="color:#da70d6">)</span>-><span style="color:#dcdcaa">nullable</span><span style="color:#da70d6">()</span>-><span style="color:#dcdcaa">comment</span><span style="color:#da70d6">(</span><span style="color:#ce9178">&#x27;</span><span style="color:#ce9178">swaslukn</span></div>
<div class="m" style="left:8.2px;top:392.8px;font-size:20px;line-height:30px;color:#d4d4d4">         <span style="color:#9cdcfe">$table</span>-><span style="color:#dcdcaa">integer</span><span style="color:#da70d6">(</span><span style="color:#ce9178">&#x27;CusUdp_ID&#x27;</span><span style="color:#da70d6">)</span>-><span style="color:#dcdcaa">nullable</span><span style="color:#da70d6">()</span>-><span style="color:#dcdcaa">comment</span><span style="color:#da70d6">(</span><span style="color:#ce9178">&#x27;</span><span style="color:#ce9178">swaslukn</span></div>
<div class="m" style="left:8.2px;top:422.8px;font-size:20px;line-height:30px;color:#d4d4d4">     <span style="color:#ffd700">}</span><span style="color:#179fff">)</span>;</div>
<div class="m" style="left:8.2px;top:452.8px;font-size:20px;line-height:30px;color:#d4d4d4"></div>
<div class="m" style="left:8.2px;top:482.8px;font-size:20px;line-height:30px;color:#d4d4d4">     <span style="color:#4ec9b0">Schema</span>::<span style="color:#dcdcaa">table</span><span style="color:#179fff">(</span><span style="color:#ce9178">&#x27;assessments&#x27;</span>, <span style="color:#569cd6">function</span> <span style="color:#ffd700">(</span><span style="color:#4ec9b0">Blueprint</span> <span style="color:#9cdcfe">$table</span><span style="color:#ffd700">)</span> <span style="color:#ffd700">{</span></div>
<div class="m" style="left:8.2px;top:512.8px;font-size:20px;line-height:30px;color:#d4d4d4">         <span style="color:#9cdcfe">$table</span>-><span style="color:#dcdcaa">integer</span><span style="color:#da70d6">(</span><span style="color:#ce9178">&#x27;CusIns_ID&#x27;</span><span style="color:#da70d6">)</span>-><span style="color:#dcdcaa">nullable</span><span style="color:#da70d6">()</span>-><span style="color:#dcdcaa">comment</span><span style="color:#da70d6">(</span><span style="color:#ce9178">&#x27;</span><span style="color:#ce9178">swaslukn</span></div>
<div class="m" style="left:8.2px;top:542.8px;font-size:20px;line-height:30px;color:#d4d4d4">         <span style="color:#9cdcfe">$table</span>-><span style="color:#dcdcaa">integer</span><span style="color:#da70d6">(</span><span style="color:#ce9178">&#x27;CusUdp_ID&#x27;</span><span style="color:#da70d6">)</span>-><span style="color:#dcdcaa">nullable</span><span style="color:#da70d6">()</span>-><span style="color:#dcdcaa">comment</span><span style="color:#da70d6">(</span><span style="color:#ce9178">&#x27;</span><span style="color:#ce9178">swaslukn</span></div>
<div class="m" style="left:8.2px;top:572.8px;font-size:20px;line-height:30px;color:#d4d4d4">     <span style="color:#ffd700">}</span><span style="color:#179fff">)</span>;</div>
<div class="m" style="left:8.2px;top:602.8px;font-size:20px;line-height:30px;color:#d4d4d4"></div>
<div class="m" style="left:8.2px;top:632.8px;font-size:20px;line-height:30px;color:#d4d4d4">     <span style="color:#4ec9b0">Schema</span>::<span style="color:#dcdcaa">table</span><span style="color:#179fff">(</span><span style="color:#ce9178">&#x27;answers&#x27;</span>, <span style="color:#569cd6">function</span> <span style="color:#ffd700">(</span><span style="color:#4ec9b0">Blueprint</span> <span style="color:#9cdcfe">$table</span><span style="color:#ffd700">)</span> <span style="color:#ffd700">{</span></div>
<div class="m" style="left:8.2px;top:662.8px;font-size:20px;line-height:30px;color:#d4d4d4">         <span style="color:#9cdcfe">$table</span>-><span style="color:#dcdcaa">integer</span><span style="color:#da70d6">(</span><span style="color:#ce9178">&#x27;CusIns_ID&#x27;</span><span style="color:#da70d6">)</span>-><span style="color:#dcdcaa">nullable</span><span style="color:#da70d6">()</span>-><span style="color:#dcdcaa">comment</span><span style="color:#da70d6">(</span><span style="color:#ce9178">&#x27;</span><span style="color:#ce9178">swaslukn</span></div>
<div class="m" style="left:8.2px;top:692.8px;font-size:20px;line-height:30px;color:#d4d4d4">         <span style="color:#9cdcfe">$table</span>-><span style="color:#dcdcaa">integer</span><span style="color:#da70d6">(</span><span style="color:#ce9178">&#x27;CusUdp_ID&#x27;</span><span style="color:#da70d6">)</span>-><span style="color:#dcdcaa">nullable</span><span style="color:#da70d6">()</span>-><span style="color:#dcdcaa">comment</span><span style="color:#da70d6">(</span><span style="color:#ce9178">&#x27;</span><span style="color:#ce9178">swaslukn</span></div>
<div class="m" style="left:8.2px;top:722.8px;font-size:20px;line-height:30px;color:#d4d4d4">     <span style="color:#ffd700">}</span><span style="color:#179fff">)</span>;</div>
<div class="m" style="left:8.2px;top:752.8px;font-size:20px;line-height:30px;color:#d4d4d4"></div>
<div class="m" style="left:8.2px;top:782.8px;font-size:20px;line-height:30px;color:#d4d4d4">     <span style="color:#4ec9b0">Schema</span>::<span style="color:#dcdcaa">table</span><span style="color:#179fff">(</span><span style="color:#ce9178">&#x27;questions&#x27;</span>, <span style="color:#569cd6">function</span> <span style="color:#ffd700">(</span><span style="color:#4ec9b0">Blueprint</span> <span style="color:#9cdcfe">$table</span><span style="color:#ffd700">)</span> <span style="color:#ffd700">{</span></div>
<div class="m" style="left:8.2px;top:812.8px;font-size:20px;line-height:30px;color:#d4d4d4">         <span style="color:#9cdcfe">$table</span>-><span style="color:#dcdcaa">integer</span><span style="color:#da70d6">(</span><span style="color:#ce9178">&#x27;CusIns_ID&#x27;</span><span style="color:#da70d6">)</span>-><span style="color:#dcdcaa">nullable</span><span style="color:#da70d6">()</span>-><span style="color:#dcdcaa">comment</span><span style="color:#da70d6">(</span><span style="color:#ce9178">&#x27;</span><span style="color:#ce9178">swaslukn</span></div>
<div class="m" style="left:8.2px;top:842.8px;font-size:20px;line-height:30px;color:#d4d4d4">         <span style="color:#9cdcfe">$table</span>-><span style="color:#dcdcaa">integer</span><span style="color:#da70d6">(</span><span style="color:#ce9178">&#x27;CusUdp_ID&#x27;</span><span style="color:#da70d6">)</span>-><span style="color:#dcdcaa">nullable</span><span style="color:#da70d6">()</span>-><span style="color:#dcdcaa">comment</span><span style="color:#da70d6">(</span><span style="color:#ce9178">&#x27;</span><span style="color:#ce9178">swaslukn</span></div>
<div class="m" style="left:8.2px;top:872.8px;font-size:20px;line-height:30px;color:#d4d4d4">     <span style="color:#ffd700">}</span><span style="color:#179fff">)</span>;</div>
<div class="m" style="left:8.2px;top:902.8px;font-size:20px;line-height:30px;color:#d4d4d4"></div>
<div class="m" style="left:8.2px;top:932.8px;font-size:20px;line-height:30px;color:#d4d4d4">     <span style="color:#4ec9b0">Schema</span>::<span style="color:#dcdcaa">table</span><span style="color:#179fff">(</span><span style="color:#ce9178">&#x27;question_groups&#x27;</span>, <span style="color:#569cd6">function</span> <span style="color:#ffd700">(</span><span style="color:#4ec9b0">Blueprint</span> <span style="color:#9cdcfe">$table</span><span style="color:#ffd700">)</span> <span style="color:#ffd700">{</span></div>
<div class="m" style="left:8.2px;top:962.8px;font-size:20px;line-height:30px;color:#d4d4d4">         <span style="color:#9cdcfe">$table</span>-><span style="color:#dcdcaa">integer</span><span style="color:#da70d6">(</span><span style="color:#ce9178">&#x27;CusIns_ID&#x27;</span><span style="color:#da70d6">)</span>-><span style="color:#dcdcaa">nullable</span><span style="color:#da70d6">()</span>-><span style="color:#dcdcaa">comment</span><span style="color:#da70d6">(</span><span style="color:#ce9178">&#x27;</span><span style="color:#ce9178">swaslukn</span></div>
<div class="m" style="left:8.2px;top:992.8px;font-size:20px;line-height:30px;color:#d4d4d4">         <span style="color:#9cdcfe">$table</span>-><span style="color:#dcdcaa">integer</span><span style="color:#da70d6">(</span><span style="color:#ce9178">&#x27;CusUdp_ID&#x27;</span><span style="color:#da70d6">)</span>-><span style="color:#dcdcaa">nullable</span><span style="color:#da70d6">()</span>-><span style="color:#dcdcaa">comment</span><span style="color:#da70d6">(</span><span style="color:#ce9178">&#x27;</span><span style="color:#ce9178">swaslukn</span></div>
<div class="m" style="left:8.2px;top:1022.8px;font-size:20px;line-height:30px;color:#d4d4d4">     <span style="color:#ffd700">}</span><span style="color:#179fff">)</span>;</div>
<div class="m" style="left:8.2px;top:1052.8px;font-size:20px;line-height:30px;color:#d4d4d4"></div>
<div class="m" style="left:8.2px;top:1082.8px;font-size:20px;line-height:30px;color:#d4d4d4">     <span style="color:#6a9955">// ww6 comment luonunaouawnawau</span></div>
<div class="m" style="left:8.2px;top:1112.8px;font-size:20px;line-height:30px;color:#d4d4d4">     <span style="color:#6a9955">// ouson products</span></div>
<div class="m" style="left:8.2px;top:1142.8px;font-size:20px;line-height:30px;color:#d4d4d4">     <span style="color:#4ec9b0">DB</span>::<span style="color:#dcdcaa">statement</span><span style="color:#179fff">(</span><span style="color:#ce9178">&quot;</span><span style="color:#569cd6">ALTER</span> <span style="color:#569cd6">TABLE</span> <span style="color:#ce9178">products</span> <span style="color:#569cd6">MODIFY</span> <span style="color:#ce9178">COLUMN</span> <span style="color:#ce9178">id</span> <span style="color:#569cd6">INT AUTO_INCREMENT</span></div>
<div class="m" style="left:8.2px;top:1172.8px;font-size:20px;line-height:30px;color:#d4d4d4">     <span style="color:#4ec9b0">DB</span>::<span style="color:#dcdcaa">statement</span><span style="color:#179fff">(</span><span style="color:#ce9178">&quot;</span><span style="color:#569cd6">ALTER</span> <span style="color:#569cd6">TABLE</span> <span style="color:#ce9178">products</span> <span style="color:#569cd6">MODIFY</span> <span style="color:#ce9178">COLUMN</span> <span style="color:#ce9178">user_id</span> <span style="color:#569cd6">INT NULL</span></div>
<div class="m" style="left:8.2px;top:1202.8px;font-size:20px;line-height:30px;color:#d4d4d4">     <span style="color:#4ec9b0">DB</span>::<span style="color:#dcdcaa">statement</span><span style="color:#179fff">(</span><span style="color:#ce9178">&quot;</span><span style="color:#569cd6">ALTER</span> <span style="color:#569cd6">TABLE</span> <span style="color:#ce9178">products</span> <span style="color:#569cd6">MODIFY</span> <span style="color:#ce9178">COLUMN</span> <span style="color:#569cd6">name</span> <span style="color:#569cd6">VARCHAR(255)</span></div>
<div class="m" style="left:8.2px;top:1232.8px;font-size:20px;line-height:30px;color:#d4d4d4">     <span style="color:#4ec9b0">DB</span>::<span style="color:#dcdcaa">statement</span><span style="color:#179fff">(</span><span style="color:#ce9178">&quot;</span><span style="color:#569cd6">ALTER</span> <span style="color:#569cd6">TABLE</span> <span style="color:#ce9178">products</span> <span style="color:#569cd6">MODIFY</span> <span style="color:#ce9178">COLUMN</span> <span style="color:#ce9178">model</span> <span style="color:#569cd6">VARCHAR(255)</span></div>
<div class="m" style="left:8.2px;top:1262.8px;font-size:20px;line-height:30px;color:#d4d4d4">     <span style="color:#4ec9b0">DB</span>::<span style="color:#dcdcaa">statement</span><span style="color:#179fff">(</span><span style="color:#ce9178">&quot;</span><span style="color:#569cd6">ALTER</span> <span style="color:#569cd6">TABLE</span> <span style="color:#ce9178">products</span> <span style="color:#569cd6">MODIFY</span> <span style="color:#ce9178">COLUMN</span> <span style="color:#ce9178">log_receive</span> <span style="color:#569cd6">DATE</span></div>
<div class="m" style="left:8.2px;top:1292.8px;font-size:20px;line-height:30px;color:#d4d4d4">     <span style="color:#4ec9b0">DB</span>::<span style="color:#dcdcaa">statement</span><span style="color:#179fff">(</span><span style="color:#ce9178">&quot;</span><span style="color:#569cd6">ALTER</span> <span style="color:#569cd6">TABLE</span> <span style="color:#ce9178">products</span> <span style="color:#569cd6">MODIFY</span> <span style="color:#ce9178">COLUMN</span> <span style="color:#ce9178">product_type</span> <span style="color:#569cd6">VARCHAR</span></div>
<div class="m" style="left:8.2px;top:1322.8px;font-size:20px;line-height:30px;color:#d4d4d4">     <span style="color:#4ec9b0">DB</span>::<span style="color:#dcdcaa">statement</span><span style="color:#179fff">(</span><span style="color:#ce9178">&quot;</span><span style="color:#569cd6">ALTER</span> <span style="color:#569cd6">TABLE</span> <span style="color:#ce9178">products</span> <span style="color:#569cd6">MODIFY</span> <span style="color:#ce9178">COLUMN</span> <span style="color:#569cd6">description</span> <span style="color:#569cd6">TEXT</span></div>
<div class="m" style="left:8.2px;top:1352.8px;font-size:20px;line-height:30px;color:#d4d4d4">     <span style="color:#4ec9b0">DB</span>::<span style="color:#dcdcaa">statement</span><span style="color:#179fff">(</span><span style="color:#ce9178">&quot;</span><span style="color:#569cd6">ALTER</span> <span style="color:#569cd6">TABLE</span> <span style="color:#ce9178">products</span> <span style="color:#569cd6">MODIFY</span> <span style="color:#ce9178">COLUMN</span> <span style="color:#569cd6">image</span> <span style="color:#569cd6">VARCHAR(255)</span></div>
</div>
<div class="r" style="left:2097.0px;top:1632.0px;width:816.0px;height:50.0px;background:#333333;border-radius:10px 10px 0 0"></div>
<svg class="r" style="left:2113.0px;top:1644.0px;" width="12" height="16" viewBox="0 0 12 16"><path d="M3 2l6 6-6 6" fill="none" stroke="#9a9a9a" stroke-width="1.5"/></svg>
<div class="t" style="left:2135.0px;top:1637.0px;font-size:19.5px;line-height:30px;color:#c8c8c8;font-weight:400;letter-spacing:0px;">Edited 21 files</div>
<div class="t" style="left:2265.0px;top:1637.0px;font-size:20px;line-height:30px;color:#7fa86e;font-weight:400;letter-spacing:0px;">+751</div>
<div class="t" style="left:2309.0px;top:1637.0px;font-size:20px;line-height:30px;color:#c8614f;font-weight:400;letter-spacing:0px;">-111</div>
<div class="t" style="left:2606.0px;top:1637.0px;font-size:20px;line-height:30px;color:#a0a0a0;font-weight:400;letter-spacing:0.1px;">Reject all</div>
<svg class="r" style="left:2692.0px;top:1644.0px;" width="16" height="16" viewBox="0 0 16 16"><path d="M8 1.5L1.5 8.5h3.5v5.5h6V8.5h3.5z" fill="none" stroke="#a0a0a0" stroke-width="1.4" stroke-linejoin="round"/></svg>
<svg class="r" style="left:2710.0px;top:1644.0px;" width="16" height="16" viewBox="0 0 16 16"><path d="M5.5 5.5h5v5h-5zM5.5 5.5V3.8a1.7 1.7 0 1 0-1.7 1.7h1.7M10.5 5.5V3.8a1.7 1.7 0 1 1 1.7 1.7h-1.7M5.5 10.5v1.7a1.7 1.7 0 1 1-1.7-1.7h1.7M10.5 10.5v1.7a1.7 1.7 0 1 0 1.7-1.7h-1.7" fill="none" stroke="#a0a0a0" stroke-width="1.3"/></svg>
<svg class="r" style="left:2727.0px;top:1644.0px;" width="17" height="16" viewBox="0 0 17 16"><path d="M5.5 2h10v12h-10L1 8z" fill="none" stroke="#a0a0a0" stroke-width="1.4" stroke-linejoin="round"/><path d="M8 5.5l5 5M13 5.5l-5 5" stroke="#a0a0a0" stroke-width="1.3"/></svg>
<div class="r" style="left:2758.0px;top:1633.0px;width:152.0px;height:36.0px;background:#363638;border-radius:8px"></div>
<div class="t" style="left:2768.0px;top:1637.0px;font-size:20px;line-height:30px;color:#d4d4d4;font-weight:400;letter-spacing:0.1px;">Accept all</div>
<svg class="r" style="left:2860.0px;top:1644.0px;" width="16" height="16" viewBox="0 0 16 16"><path d="M5.5 5.5h5v5h-5zM5.5 5.5V3.8a1.7 1.7 0 1 0-1.7 1.7h1.7M10.5 5.5V3.8a1.7 1.7 0 1 1 1.7 1.7h-1.7M5.5 10.5v1.7a1.7 1.7 0 1 1-1.7-1.7h1.7M10.5 10.5v1.7a1.7 1.7 0 1 0 1.7-1.7h-1.7" fill="none" stroke="#dcdcdc" stroke-width="1.3"/></svg>
<svg class="r" style="left:2877.0px;top:1643.0px;" width="18" height="17" viewBox="0 0 18 17"><path d="M16 2v7.5H3M7 5l-4 4.5 4 4.5" fill="none" stroke="#dcdcdc" stroke-width="1.6" stroke-linejoin="round"/></svg>
<div class="r" style="left:2087.0px;top:1673.0px;width:836.0px;height:155.8px;background:#3b3b3b;border-radius:12px"></div>
<div class="r" style="left:2100.0px;top:1685.0px;width:146.5px;height:29.5px;background:transparent;border:1.3px solid #505050;border-radius:5px"></div>
<svg class="r" style="left:2107.0px;top:1692.0px;" width="16" height="16" viewBox="0 0 16 16"><circle cx="8" cy="8" r="7" fill="none" stroke="#9a9a9a" stroke-width="1.3"/><circle cx="8" cy="8" r="3" fill="none" stroke="#9a9a9a" stroke-width="1.3"/><path d="M11 5v4.5a1.8 1.8 0 0 0 3.6 0" fill="none" stroke="#9a9a9a" stroke-width="1.3"/></svg>
<div class="t" style="left:2131.4px;top:1685.0px;font-size:20px;line-height:30px;color:#c8c8c8;font-weight:400;letter-spacing:0px;">Add context</div>
<div class="t" style="left:2100.0px;top:1723.0px;font-size:22.4px;line-height:36px;color:#7c7c7c;font-weight:400;letter-spacing:0.08px;">Plan, search, build anything</div>
<div class="r" style="left:2100.0px;top:1785.0px;width:140.6px;height:29.6px;background:#434343;border-radius:15px"></div>
<svg class="r" style="left:2108.0px;top:1793.0px;" width="20" height="12" viewBox="0 0 20 12"><path d="M10 6c-2-3-3.5-4.5-5.5-4.5a4.5 4.5 0 0 0 0 9c2 0 3.5-1.5 5.5-4.5s3.5-4.5 5.5-4.5a4.5 4.5 0 0 1 0 9c-2 0-3.5-1.5-5.5-4.5z" fill="none" stroke="#b0b0b0" stroke-width="1.4"/></svg>
<div class="t" style="left:2133.6px;top:1785.0px;font-size:19.5px;line-height:30px;color:#cfcfcf;font-weight:700;letter-spacing:0px;">Agent</div>
<svg class="r" style="left:2192.0px;top:1795.0px;" width="12" height="12" viewBox="0 0 16 16"><path d="M5.5 5.5h5v5h-5zM5.5 5.5V3.8a1.7 1.7 0 1 0-1.7 1.7h1.7M10.5 5.5V3.8a1.7 1.7 0 1 1 1.7 1.7h-1.7M5.5 10.5v1.7a1.7 1.7 0 1 1-1.7-1.7h1.7M10.5 10.5v1.7a1.7 1.7 0 1 0 1.7-1.7h-1.7" fill="none" stroke="#9a9a9a" stroke-width="1.3"/></svg>
<div class="m" style="left:2204.0px;top:1786.0px;font-size:15px;line-height:30px;color:#9a9a9a;font-weight:400;letter-spacing:0px;">I</div>
<svg class="r" style="left:2221.0px;top:1795.0px;" width="12" height="8" viewBox="0 0 12 8"><path d="M1.5 6.5l4.5-4.5 4.5 4.5" fill="none" stroke="#9a9a9a" stroke-width="1.3"/></svg>
<div class="t" style="left:2254.0px;top:1785.0px;font-size:20.5px;line-height:30px;color:#a8a8a8;font-weight:400;letter-spacing:-0.2px;">Auto</div>
<svg class="r" style="left:2299.0px;top:1795.0px;" width="12" height="8" viewBox="0 0 12 8"><path d="M1.5 6.5l4.5-4.5 4.5 4.5" fill="none" stroke="#8a8a8a" stroke-width="1.3"/></svg>
<svg class="r" style="left:2790.0px;top:1793.0px;" width="20" height="16" viewBox="0 0 20 16"><rect x="1" y="1" width="18" height="14" rx="2" fill="none" stroke="#9a9a9a" stroke-width="1.5"/><path d="M1.5 14L7 8l4 4 3-2.5 5 4.5z" fill="#9a9a9a"/><circle cx="6" cy="5.5" r="1.5" fill="#9a9a9a"/></svg>
<div class="r" style="left:2823.0px;top:1786.3px;width:87.0px;height:26.5px;background:#34506b;border-radius:5px"></div>
<div class="t" style="left:2832.8px;top:1785.0px;font-size:20px;line-height:30px;color:#a9b9c9;font-weight:400;letter-spacing:0.2px;">Send</div>
<svg class="r" style="left:2883.0px;top:1792.0px;" width="17" height="14" viewBox="0 0 17 14"><path d="M15 1.5v6H3M6.5 4l-3.5 3.5 3.5 3.5" fill="none" stroke="#8ea4ba" stroke-width="1.5" stroke-linejoin="round"/></svg>
<div class="t" style="left:2514.0px;top:1835.0px;font-size:20px;line-height:30px;color:#7e7e7e;font-weight:400;letter-spacing:-0.3px;">Start a new chat for better results.</div>
<div class="t" style="left:2826.6px;top:1835.0px;font-size:20px;line-height:30px;color:#a8a8a8;font-weight:400;letter-spacing:-0.2px;">New chat</div>
<div class="r" style="left:0.0px;top:1876.0px;width:57.0px;height:36.0px;background:#3b7c5a;"></div>
<svg class="r" style="left:18.0px;top:1883.0px;" width="24" height="22" viewBox="0 0 24 22"><path d="M3 20l6.5-6.5L3 7M21 2l-6.5 6.5L21 15" fill="none" stroke="#fff" stroke-width="1.7"/></svg>
<svg class="r" style="left:70.0px;top:1883.0px;" width="21" height="21" viewBox="0 0 21 21"><circle cx="10.5" cy="10.5" r="9.3" fill="none" stroke="#fff" stroke-width="1.6"/><path d="M6.5 6.5l8 8M14.5 6.5l-8 8" stroke="#fff" stroke-width="1.6"/></svg>
<div class="t" style="left:99.0px;top:1878.0px;font-size:20.5px;line-height:30px;color:#ffffff;font-weight:400;letter-spacing:0px;">0</div>
<svg class="r" style="left:118.0px;top:1882.0px;" width="21" height="20" viewBox="0 0 21 20"><path d="M10.5 1.5L20 18.5H1z" fill="none" stroke="#fff" stroke-width="1.6" stroke-linejoin="round"/><path d="M10.5 7v6M10.5 15v1.8" stroke="#fff" stroke-width="1.8"/></svg>
<div class="t" style="left:146.0px;top:1878.0px;font-size:20.5px;line-height:30px;color:#ffffff;font-weight:400;letter-spacing:0px;">0</div>
<svg class="r" style="left:187.0px;top:1882.0px;" width="21" height="21" viewBox="0 0 21 21"><path d="M5 3a9 9 0 0 0 0 12M16 3a9 9 0 0 1 0 12M7.5 5.5a5.5 5.5 0 0 0 0 7M13.5 5.5a5.5 5.5 0 0 1 0 7" fill="none" stroke="#fff" stroke-width="1.5"/><circle cx="10.5" cy="9" r="1.6" fill="#fff"/><path d="M10.5 10.5L6.5 20M10.5 10.5l4 9.5M8 16.5h5" fill="none" stroke="#fff" stroke-width="1.5"/></svg>
<div class="t" style="left:215.0px;top:1878.0px;font-size:20.5px;line-height:30px;color:#ffffff;font-weight:400;letter-spacing:0px;">0</div>
<div class="r" style="left:2566.0px;top:1876.0px;width:57.0px;height:36.0px;background:#1f4573;"></div>
<svg class="r" style="left:2582.0px;top:1881.0px;" width="25" height="25" viewBox="0 0 25 25"><circle cx="10" cy="10" r="7.5" fill="none" stroke="#fff" stroke-width="1.7"/><path d="M6.5 10h7M15.5 15.5l6 6" stroke="#fff" stroke-width="1.7"/></svg>
<svg class="r" style="left:2638.0px;top:1882.0px;" width="19" height="23" viewBox="0 0 19 23"><circle cx="9.5" cy="9" r="2" fill="#fff"/><path d="M5 14a6.5 6.5 0 1 1 9 0M2.6 16.5a9.8 9.8 0 1 1 13.8 0" fill="none" stroke="#fff" stroke-width="1.5"/><path d="M9.5 11v11" stroke="#fff" stroke-width="1.7"/></svg>
<div class="t" style="left:2665.0px;top:1878.0px;font-size:20.5px;line-height:30px;color:#ffffff;font-weight:400;letter-spacing:0px;">Go Live</div>
<div class="t" style="left:2763.0px;top:1878.0px;font-size:20.5px;line-height:30px;color:#ffffff;font-weight:400;letter-spacing:0px;">Cursor Tab</div>
<svg class="r" style="left:2891.0px;top:1880.0px;" width="28" height="28" viewBox="0 0 28 28"><path d="M12.5 4a6.5 6.5 0 0 0-6.5 6.5v6l-2.5 3.5h18l-2.5-3.5v-6A6.5 6.5 0 0 0 12.5 4zM9.5 22.5a3 3 0 0 0 6 0" fill="none" stroke="#fff" stroke-width="1.6"/><circle cx="21" cy="5" r="3.8" fill="#fff"/></svg>
<div class="r" style="left:27.5px;top:1756.5px;width:299.0px;height:88.0px;background:#242424;border:1.2px solid #363636;border-radius:10px;box-shadow:0 2px 8px #0008"></div>
<svg class="r" style="left:41.0px;top:1771.0px;" width="16" height="17" viewBox="0 0 16 17"><rect x="1" y="6" width="14" height="10" fill="none" stroke="#c0c0c0" stroke-width="1.4"/><path d="M1 9h14M8 6v10M8 6C6 2 3 2 3.5 4.5S8 6 8 6M8 6c2-4 5-4 4.5-1.5S8 6 8 6" fill="none" stroke="#c0c0c0" stroke-width="1.3"/></svg>
<div class="t" style="left:68.0px;top:1766.0px;font-size:17.4px;line-height:28px;color:#8c8c8c;font-weight:700;letter-spacing:0px;">New update available</div>
<svg class="r" style="left:293.0px;top:1774.0px;" width="12" height="12" viewBox="0 0 12 12"><path d="M1 1l10 10M11 1L1 11" stroke="#c0c0c0" stroke-width="1.5"/></svg>
<div class="r" style="left:41.0px;top:1804.0px;width:271.0px;height:27.0px;background:#2c5c8f;border-radius:5px"></div>
<div class="t" style="left:125.0px;top:1803.5px;font-size:19.3px;line-height:28px;color:#ffffff;font-weight:400;letter-spacing:0px;">Update now</div></body></html>
